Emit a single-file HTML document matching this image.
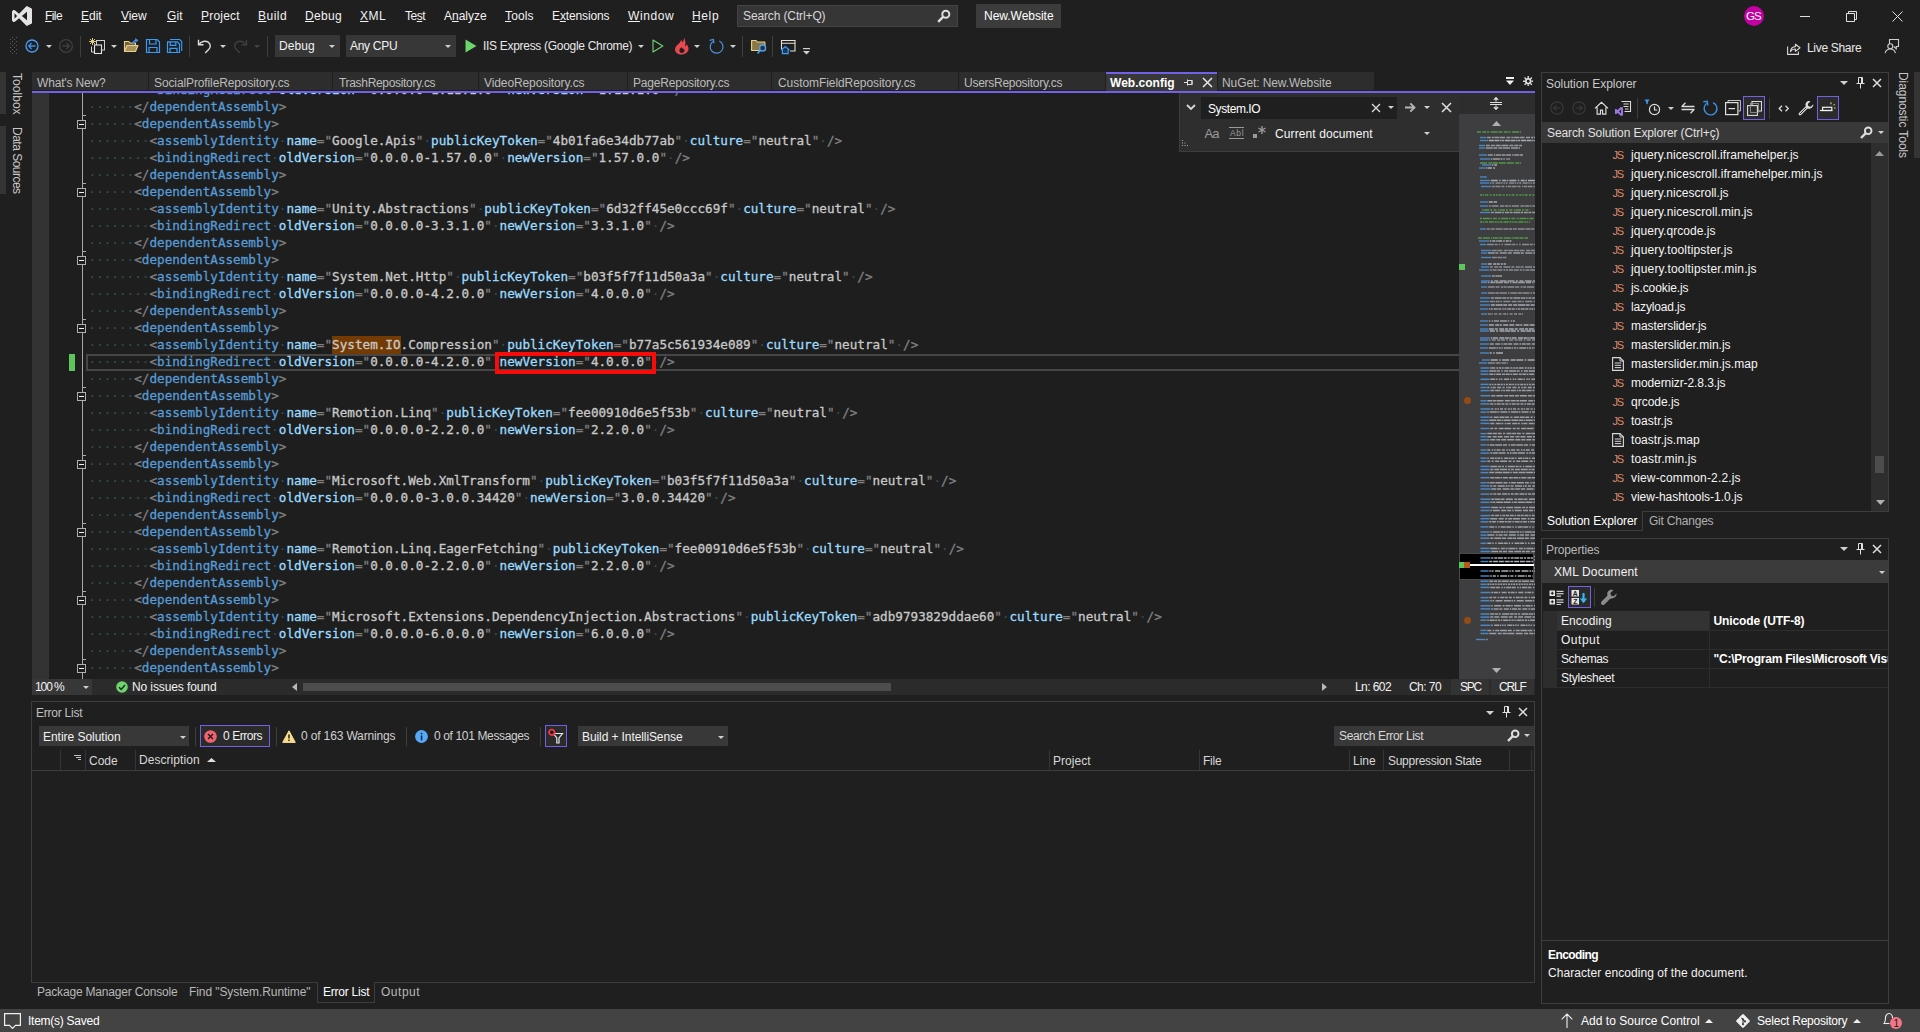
<!DOCTYPE html>
<html lang="en"><head><meta charset="utf-8"><title>New.Website - Microsoft Visual Studio</title>
<style>
html,body{margin:0;padding:0;}
body{width:1920px;height:1032px;overflow:hidden;background:#1f1f1f;position:relative;font-family:"Liberation Sans", sans-serif;font-size:12px;color:#f2f2f2;}
#r{position:absolute;left:0;top:0;width:1920px;height:1032px;overflow:hidden;}
#r div,#r span,#r svg{position:absolute;box-sizing:border-box;}
#r span{white-space:pre;line-height:16px;}
#r u{text-decoration:underline;text-underline-offset:1px;text-decoration-thickness:1px;}
#r .cl{left:88.5px;height:17px;line-height:17px;font-family:"DejaVu Sans Mono", "Liberation Mono", monospace;font-size:12.652px;white-space:pre;color:#c8c8c8;-webkit-text-stroke:.3px;}
#r .cl i,#r .cl b,#r .cl em,#r .cl s,#r .cl q{font-style:normal;font-weight:normal;text-decoration:none;position:static;}
#r .cl i{color:#808080;}
#r .cl b{color:#569cd6;}
#r .cl em{color:#9cdcfe;}
#r .cl s{color:#33504f;-webkit-text-stroke:0;}
#r .cl q{quotes:none;background:#733b03;padding:1px 0 2px;}
#r .cl span{position:static;line-height:17px;}
</style></head>
<body><div id="r">
<svg style="left:12px;top:6px;" width="20" height="20" viewBox="0 0 24 24"><path d="M17.600 0 23.200 2.700Q24 3.100 24 4V20Q24 20.900 23.200 21.300L17.600 24 8.500 14.700 3.500 18.800 1.500 19.200 0 17.300V6.700L1.500 4.800 3.500 5.200 8.500 9.300ZM18 6.900V17.100L11.800 12ZM3 8.600V15.400L6.100 12Z" fill="#e4e4e4" fill-rule="evenodd"/></svg>
<span style="left:45px;top:8.0px;letter-spacing:-0.581px;"><u>F</u>ile</span>
<span style="left:81px;top:8.0px;letter-spacing:-0.029px;"><u>E</u>dit</span>
<span style="left:121px;top:8.0px;letter-spacing:-0.066px;"><u>V</u>iew</span>
<span style="left:167px;top:8.0px;letter-spacing:0.128px;"><u>G</u>it</span>
<span style="left:201px;top:8.0px;letter-spacing:0.207px;"><u>P</u>roject</span>
<span style="left:258px;top:8.0px;letter-spacing:0.478px;"><u>B</u>uild</span>
<span style="left:305px;top:8.0px;letter-spacing:0.306px;"><u>D</u>ebug</span>
<span style="left:360px;top:8.0px;letter-spacing:0.456px;"><u>X</u>ML</span>
<span style="left:405px;top:8.0px;letter-spacing:-0.472px;">Te<u>s</u>t</span>
<span style="left:444px;top:8.0px;letter-spacing:-0.017px;">A<u>n</u>alyze</span>
<span style="left:505px;top:8.0px;letter-spacing:0.146px;"><u>T</u>ools</span>
<span style="left:552px;top:8.0px;letter-spacing:-0.123px;">E<u>x</u>tensions</span>
<span style="left:628px;top:8.0px;letter-spacing:0.583px;"><u>W</u>indow</span>
<span style="left:692px;top:8.0px;letter-spacing:0.638px;"><u>H</u>elp</span>
<div style="left:737px;top:5px;width:221px;height:22px;background:#363636;border:1px solid #434343;"></div>
<span style="left:743px;top:8.0px;color:#d8d8d8;letter-spacing:-0.126px;">Search (Ctrl+Q)</span>
<svg style="left:937px;top:9px;" width="14" height="14" viewBox="0 0 14 14"><circle cx="8.8" cy="5.2" r="3.500" fill="none" stroke="#dedede" stroke-width="2"/><path d="M6.3 7.7 1.2 12.8" stroke="#dedede" stroke-width="2.500"/></svg>
<div style="left:976px;top:4px;width:85px;height:24px;background:#3c3c3c;"></div>
<span style="left:984px;top:8.0px;color:#ffffff;letter-spacing:-0.021px;">New.Website</span>
<div style="left:1743.5px;top:5.5px;width:20.5px;height:20.5px;background:#c500a3;border-radius:50%;"></div>
<span style="left:1746px;top:8.0px;font-size:11.5px;color:#ffffff;letter-spacing:-1.025px;">GS</span>
<svg style="left:1800px;top:16px;" width="10" height="1" viewBox="0 0 10 1"><rect width="10" height="1" fill="#e0e0e0"/></svg>
<svg style="left:1846px;top:11px;" width="11" height="11" viewBox="0 0 11 11"><path d="M.5 2.5h8v8h-8zM2.5 2.5v-2h8v8h-2" fill="none" stroke="#e0e0e0"/></svg>
<svg style="left:1892px;top:11px;" width="11" height="11" viewBox="0 0 11 11"><path d="M.5.5l10 10M10.5.5l-10 10" stroke="#e0e0e0" fill="none"/></svg>
<svg style="left:1787px;top:42px;" width="14" height="13" viewBox="0 0 14 13"><path d="M.6 4.5v7.9h10.8V9.5" fill="none" stroke="#d8d8d8" stroke-width="1.1"/><path d="M3.4 9.6c.4-3.2 2.2-4.9 5-5V2.2l4.6 3.6-4.6 3.6V7c-2.3-.1-3.9.8-5 2.6z" fill="none" stroke="#d8d8d8" stroke-width="1.1" stroke-linejoin="round"/></svg>
<span style="left:1807px;top:40.0px;color:#e8e8e8;letter-spacing:-0.308px;">Live Share</span>
<svg style="left:1884px;top:38px;" width="16" height="16" viewBox="0 0 16 16"><path d="M5.5 7.5V1.5h9v7h-2.2v2.3L9.8 8.5" fill="none" stroke="#d0d0d0" stroke-width="1.1"/><circle cx="6.3" cy="8.3" r="2.5" fill="#1f1f1f" stroke="#d0d0d0" stroke-width="1.1"/><path d="M1.2 15.2c.5-2.9 2.4-4.2 5.1-4.2s4.6 1.3 5.1 4.2" fill="none" stroke="#d0d0d0" stroke-width="1.1"/></svg>
<svg style="left:10px;top:37px;" width="8" height="20" viewBox="0 0 8 20"><rect x="2" y="0" width="1" height="1" fill="#5c5c5c"/><rect x="6" y="0" width="1" height="1" fill="#5c5c5c"/><rect x="0" y="2" width="1" height="1" fill="#5c5c5c"/><rect x="4" y="2" width="1" height="1" fill="#5c5c5c"/><rect x="2" y="4" width="1" height="1" fill="#5c5c5c"/><rect x="6" y="4" width="1" height="1" fill="#5c5c5c"/><rect x="0" y="6" width="1" height="1" fill="#5c5c5c"/><rect x="4" y="6" width="1" height="1" fill="#5c5c5c"/><rect x="2" y="8" width="1" height="1" fill="#5c5c5c"/><rect x="6" y="8" width="1" height="1" fill="#5c5c5c"/><rect x="0" y="10" width="1" height="1" fill="#5c5c5c"/><rect x="4" y="10" width="1" height="1" fill="#5c5c5c"/><rect x="2" y="12" width="1" height="1" fill="#5c5c5c"/><rect x="6" y="12" width="1" height="1" fill="#5c5c5c"/><rect x="0" y="14" width="1" height="1" fill="#5c5c5c"/><rect x="4" y="14" width="1" height="1" fill="#5c5c5c"/><rect x="2" y="16" width="1" height="1" fill="#5c5c5c"/><rect x="6" y="16" width="1" height="1" fill="#5c5c5c"/></svg>
<svg style="left:23.5px;top:37.5px;" width="16" height="16" viewBox="0 0 16 16"><circle cx="8" cy="8" r="6" fill="none" stroke="#4b9cf0" stroke-width="1.3"/><path d="M11.6 8H4.8M7.6 5 4.6 8l3 3" fill="none" stroke="#3b8fe4" stroke-width="1.3"/></svg>
<svg style="left:46px;top:45px;" width="6" height="3" viewBox="0 0 6 3"><path d="M0 0H6L3.0 3Z" fill="#d0d0d0"/></svg>
<svg style="left:58px;top:38px;" width="16" height="16" viewBox="0 0 16 16"><circle cx="8" cy="8" r="6.4" fill="none" stroke="#3f3f3f" stroke-width="1.3"/><path d="M4.4 8h6.8M8.4 5l3 3-3 3" fill="none" stroke="#3f3f3f" stroke-width="1.3"/></svg>
<div style="left:80px;top:36px;width:1px;height:21px;background:#3d3d3d;"></div>
<svg style="left:88px;top:37px;" width="18" height="18" viewBox="0 0 18 18"><rect x="8.500" y="3.500" width="8" height="9.500" fill="none" stroke="#d0d0d0" stroke-width="1"/><path d="M3.500 9.500v5.500h3" fill="none" stroke="#d8d8d8" stroke-width="1"/><rect x="6.500" y="8" width="7" height="8.500" fill="#1f1f1f" stroke="#e4e4e4" stroke-width="1.100"/><path d="M4.500 1v7M1 4.500h7M2 2l5 5M7 2 2 7" stroke="#f0dc8c" stroke-width=".900"/></svg>
<svg style="left:111px;top:45px;" width="6" height="3" viewBox="0 0 6 3"><path d="M0 0H6L3.0 3Z" fill="#d0d0d0"/></svg>
<svg style="left:123px;top:37px;" width="17" height="18" viewBox="0 0 17 18"><path d="M1.500 14.500V4.500h4.200l1.300 1.500h5.500v2.500" fill="#6d5f38" stroke="#e9d18d" stroke-width="1.100"/><path d="M1.500 14.500 4 8.500h11L12.500 14.500z" fill="#a8925a" stroke="#e9d18d" stroke-width="1.100" stroke-linejoin="round"/><path d="M10 7.500c.1-2.600 1.300-4 3.300-4.300" fill="none" stroke="#3b8fe4" stroke-width="1.400"/><path d="M12 1l3.500 2.200-3 2.600z" fill="#3b8fe4"/></svg>
<svg style="left:145px;top:38px;" width="16" height="16" viewBox="0 0 16 16"><path d="M1.500 1.500h10.700l2.300 2.300v10.700H1.500z" fill="none" stroke="#3b9bf5" stroke-width="1.200"/><path d="M4.500 1.500v4.500h6.500V1.500M4 14.500V9.500h8v5" fill="none" stroke="#3b9bf5" stroke-width="1.200"/></svg>
<svg style="left:166px;top:38px;" width="17" height="16" viewBox="0 0 17 16"><path d="M4 1.500h9.700l2 2v9.500" fill="none" stroke="#3b9bf5" stroke-width="1.100"/><path d="M1.500 3.800h9.800l2.200 2.200v8.500H1.500z" fill="none" stroke="#3b9bf5" stroke-width="1.200"/><path d="M4.200 4v3.300h5.600V4M4 14.300v-4h7v4" fill="none" stroke="#3b9bf5" stroke-width="1.200"/></svg>
<div style="left:189px;top:36px;width:1px;height:21px;background:#3d3d3d;"></div>
<svg style="left:197px;top:38px;" width="16" height="16" viewBox="0 0 16 16"><path d="M1.5 1.8v5h5" fill="none" stroke="#dcdcdc" stroke-width="1.4"/><path d="M1.8 6.6C4 3.4 8.300 2.200 11.2 4.200c2.800 2 2.600 5.300.4 7.400L8.200 15" fill="none" stroke="#dcdcdc" stroke-width="1.4"/></svg>
<svg style="left:220px;top:45px;" width="6" height="3" viewBox="0 0 6 3"><path d="M0 0H6L3.0 3Z" fill="#d0d0d0"/></svg>
<svg style="left:232px;top:38px;" width="16" height="16" viewBox="0 0 16 16"><path d="M14.5 1.8v5h-5" fill="none" stroke="#3f3f3f" stroke-width="1.4"/><path d="M14.2 6.600C12 3.400 7.700 2.200 4.800 4.200c-2.800 2-2.600 5.300-.4 7.400L7.800 15" fill="none" stroke="#3f3f3f" stroke-width="1.4"/></svg>
<svg style="left:254px;top:45px;" width="6" height="3" viewBox="0 0 6 3"><path d="M0 0H6L3.0 3Z" fill="#444"/></svg>
<div style="left:267px;top:36px;width:1px;height:21px;background:#3d3d3d;"></div>
<div style="left:275px;top:35px;width:65px;height:22px;background:#373737;"></div>
<span style="left:279px;top:38.0px;letter-spacing:0.056px;">Debug</span>
<svg style="left:329px;top:45px;" width="6" height="3" viewBox="0 0 6 3"><path d="M0 0H6L3.0 3Z" fill="#d0d0d0"/></svg>
<div style="left:346px;top:35px;width:110px;height:22px;background:#373737;"></div>
<span style="left:350px;top:38.0px;letter-spacing:-0.293px;">Any CPU</span>
<svg style="left:445px;top:45px;" width="6" height="3" viewBox="0 0 6 3"><path d="M0 0H6L3.0 3Z" fill="#d0d0d0"/></svg>
<svg style="left:465px;top:39px;" width="12" height="14" viewBox="0 0 12 14"><path d="M.5.5v13L11.500 7z" fill="#6cd66c"/></svg>
<span style="left:483px;top:38.0px;color:#e8e8e8;letter-spacing:-0.300px;">IIS Express (Google Chrome)</span>
<svg style="left:638px;top:45px;" width="6" height="3" viewBox="0 0 6 3"><path d="M0 0H6L3.0 3Z" fill="#d0d0d0"/></svg>
<svg style="left:652px;top:38.5px;" width="12" height="14" viewBox="0 0 12 14"><path d="M1 1v12l9.800-6z" fill="none" stroke="#72d072" stroke-width="1.100" stroke-linejoin="round"/></svg>
<svg style="left:674px;top:37px;" width="16" height="18" viewBox="0 0 16 18"><path d="M9.800.600c.500 2.300-.400 3.800-1.800 5 .100-1.200-.300-2.200-1-2.900-.200 2-1.300 3.100-2.600 4.400C3 8.500 1 10 1 12.600c0 2.800 2.600 5 6.300 5 4 0 7.200-2.400 7.200-5.800 0-2-.800-3.400-1.600-4.400-.300 1.100-.900 1.800-1.700 2.200.600-3.200.200-6.900-1.400-9z" fill="#e8494f"/><path d="M7.600 10.300c-1.300 1-2.200 1.800-2.200 3.200s1 2.400 2.500 2.400 2.600-1 2.600-2.400c0-.900-.400-1.500-.800-2-.200.600-.500.900-.900 1.100.100-.900-.300-1.700-1.200-2.300z" fill="#1f1f1f"/></svg>
<svg style="left:694px;top:45px;" width="6" height="3" viewBox="0 0 6 3"><path d="M0 0H6L3.0 3Z" fill="#d0d0d0"/></svg>
<svg style="left:707.5px;top:37.5px;" width="17" height="17" viewBox="0 0 17 17"><path d="M5 3.500A6.400 6.400 0 1 0 11.300 3" fill="none" stroke="#4a94e0" stroke-width="1.200"/><path d="M1.600 2.300 5.400 1.500 6 5.300" fill="none" stroke="#4a94e0" stroke-width="1.200"/></svg>
<svg style="left:730px;top:45px;" width="6" height="3" viewBox="0 0 6 3"><path d="M0 0H6L3.0 3Z" fill="#d0d0d0"/></svg>
<div style="left:742px;top:36px;width:1px;height:21px;background:#3d3d3d;"></div>
<svg style="left:750px;top:38px;" width="18" height="17" viewBox="0 0 18 17"><path d="M1.600 12.500V2.500h4.500l1.300 1.500h7.500v8.500z" fill="#8a7844" stroke="#e9d18d" stroke-width="1.100" stroke-linejoin="round"/><circle cx="12.600" cy="10" r="3" fill="#2a2f38" stroke="#4aa0f5" stroke-width="1.400"/><path d="M10.400 12.300 7.600 15.400" stroke="#4aa0f5" stroke-width="1.700"/></svg>
<div style="left:772px;top:36px;width:1px;height:21px;background:#3d3d3d;"></div>
<svg style="left:779px;top:38px;" width="17" height="17" viewBox="0 0 17 17"><path d="M2.500 11.500V2.500h13.500v10.500H11M2.500 5.300h13.500" fill="none" stroke="#e6e0d4" stroke-width="1.100"/><path d="M2.200 12 6.300 8.600l4.100 3.400M3.400 11.600v4h5.800v-4" fill="#1b3a5c" stroke="#3b9bf5" stroke-width="1.200"/></svg>
<svg style="left:803px;top:48px;" width="7" height="7" viewBox="0 0 7 7"><rect x="0" y="0" width="7" height="1.200" fill="#d0d0d0"/><path d="M0 3h7L3.500 6.500z" fill="#d0d0d0"/></svg>
<div style="left:0px;top:72px;width:6px;height:42px;background:#353535;"></div>
<div style="left:0px;top:126px;width:6px;height:68px;background:#353535;"></div>
<span style="left:25px;top:72.5px;color:#c8c8c8;letter-spacing:0.038px;transform-origin:0 0;transform:rotate(90deg);">Toolbox</span>
<span style="left:25px;top:127.0px;color:#c8c8c8;letter-spacing:-0.509px;transform-origin:0 0;transform:rotate(90deg);">Data Sources</span>
<div style="left:32px;top:72px;width:116px;height:18px;background:#2d2d2d;"></div>
<span style="left:37px;top:74.5px;color:#bcbcbc;letter-spacing:-0.171px;">What&#x27;s New?</span>
<div style="left:149px;top:72px;width:183px;height:18px;background:#2d2d2d;"></div>
<span style="left:154px;top:74.5px;color:#bcbcbc;letter-spacing:-0.116px;">SocialProfileRepository.cs</span>
<div style="left:333px;top:72px;width:145px;height:18px;background:#2d2d2d;"></div>
<span style="left:339px;top:74.5px;color:#bcbcbc;letter-spacing:-0.319px;">TrashRepository.cs</span>
<div style="left:479px;top:72px;width:148px;height:18px;background:#2d2d2d;"></div>
<span style="left:484px;top:74.5px;color:#bcbcbc;letter-spacing:-0.099px;">VideoRepository.cs</span>
<div style="left:628px;top:72px;width:143px;height:18px;background:#2d2d2d;"></div>
<span style="left:633px;top:74.5px;color:#bcbcbc;letter-spacing:-0.202px;">PageRepository.cs</span>
<div style="left:772px;top:72px;width:186px;height:18px;background:#2d2d2d;"></div>
<span style="left:778px;top:74.5px;color:#bcbcbc;letter-spacing:-0.068px;">CustomFieldRepository.cs</span>
<div style="left:959px;top:72px;width:146px;height:18px;background:#2d2d2d;"></div>
<span style="left:964px;top:74.5px;color:#bcbcbc;letter-spacing:-0.267px;">UsersRepository.cs</span>
<div style="left:1106px;top:72px;width:111px;height:19px;background:#383838;border-top:2px solid #7160e8;"></div>
<span style="left:1110px;top:74.5px;color:#ffffff;font-weight:700;letter-spacing:0.016px;">Web.config</span>
<svg style="left:1184px;top:78px;" width="9" height="9" viewBox="0 0 9 9"><path d="M0 4.500h3M3.500 1.500v6M3.500 2.500h4.500v4H3.500M8 2v5" fill="none" stroke="#e0e0e0" stroke-width="1"/></svg>
<svg style="left:1202px;top:77px;" width="11" height="11" viewBox="0 0 11 11"><path d="M1 1l9 9M10 1l-9 9" stroke="#e8e8e8" stroke-width="1.500" fill="none"/></svg>
<div style="left:1218px;top:72px;width:156px;height:18px;background:#2d2d2d;"></div>
<span style="left:1222px;top:74.5px;color:#bcbcbc;letter-spacing:-0.092px;">NuGet: New.Website</span>
<svg style="left:1506px;top:77px;" width="8" height="9" viewBox="0 0 8 9"><rect width="8" height="2" fill="#f0f0f0"/><path d="M0 3.500h8L4 8z" fill="#f0f0f0"/></svg>
<svg style="left:1523px;top:76px;" width="10.4" height="10.4" viewBox="0 0 12 12"><g fill="none" stroke="#e0e0e0"><circle cx="6" cy="6" r="2.700" stroke-width="2"/><path d="M6 0v12M0 6h12M1.800 1.800l8.400 8.400M10.200 1.800 1.800 10.200" stroke-width="1.600" stroke-dasharray="2.200 7.600 2.200 0"/></g><circle cx="6" cy="6" r="1.300" fill="#1f1f1f"/></svg>
<div style="left:32px;top:91px;width:1503px;height:2px;background:#7160e8;"></div>
<div style="left:32px;top:93px;width:1427px;height:586px;background:#1e1e1e;overflow:hidden;"></div>
<div style="left:32px;top:93px;width:17px;height:586px;background:#333333;"></div>
<div style="left:0;top:93px;width:1459px;height:586px;overflow:hidden;">
<div style="left:82px;top:0;width:1px;height:587px;background:#a8a8a8;"></div>
<div style="left:86px;top:261px;width:1373px;height:17px;border:2px solid #464646;border-right:none;"></div>
<div style="left:69px;top:261px;width:6px;height:17px;background:#5ec45c;"></div>
<div class="cl" style="top:-12px"><s>········</s><i>&lt;</i><b>bindingRedirect</b><s>·</s><em>oldVersion</em><i>="</i>0.0.0.0-1.11.1.0<i>"</i><s>·</s><em>newVersion</em><i>="</i>1.11.1.0<i>"</i><s>·</s><i>/&gt;</i></div>
<div class="cl" style="top:5px"><s>······</s><i>&lt;/</i><b>dependentAssembly</b><i>&gt;</i></div>
<div style="left:82px;top:22px;width:4px;height:1px;background:#a8a8a8;"></div>
<div class="cl" style="top:22px"><s>······</s><i>&lt;</i><b>dependentAssembly</b><i>&gt;</i></div>
<div style="left:77px;top:27px;width:9px;height:9px;border:1px solid #b0b0b0;background:#1e1e1e;"></div>
<div style="left:79px;top:31px;width:5px;height:1px;background:#f0f0f0;"></div>
<div class="cl" style="top:39px"><s>········</s><i>&lt;</i><b>assemblyIdentity</b><s>·</s><em>name</em><i>="</i>Google.Apis<i>"</i><s>·</s><em>publicKeyToken</em><i>="</i>4b01fa6e34db77ab<i>"</i><s>·</s><em>culture</em><i>="</i>neutral<i>"</i><s>·</s><i>/&gt;</i></div>
<div class="cl" style="top:56px"><s>········</s><i>&lt;</i><b>bindingRedirect</b><s>·</s><em>oldVersion</em><i>="</i>0.0.0.0-1.57.0.0<i>"</i><s>·</s><em>newVersion</em><i>="</i>1.57.0.0<i>"</i><s>·</s><i>/&gt;</i></div>
<div class="cl" style="top:73px"><s>······</s><i>&lt;/</i><b>dependentAssembly</b><i>&gt;</i></div>
<div style="left:82px;top:90px;width:4px;height:1px;background:#a8a8a8;"></div>
<div class="cl" style="top:90px"><s>······</s><i>&lt;</i><b>dependentAssembly</b><i>&gt;</i></div>
<div style="left:77px;top:95px;width:9px;height:9px;border:1px solid #b0b0b0;background:#1e1e1e;"></div>
<div style="left:79px;top:99px;width:5px;height:1px;background:#f0f0f0;"></div>
<div class="cl" style="top:107px"><s>········</s><i>&lt;</i><b>assemblyIdentity</b><s>·</s><em>name</em><i>="</i>Unity.Abstractions<i>"</i><s>·</s><em>publicKeyToken</em><i>="</i>6d32ff45e0ccc69f<i>"</i><s>·</s><em>culture</em><i>="</i>neutral<i>"</i><s>·</s><i>/&gt;</i></div>
<div class="cl" style="top:124px"><s>········</s><i>&lt;</i><b>bindingRedirect</b><s>·</s><em>oldVersion</em><i>="</i>0.0.0.0-3.3.1.0<i>"</i><s>·</s><em>newVersion</em><i>="</i>3.3.1.0<i>"</i><s>·</s><i>/&gt;</i></div>
<div class="cl" style="top:141px"><s>······</s><i>&lt;/</i><b>dependentAssembly</b><i>&gt;</i></div>
<div style="left:82px;top:158px;width:4px;height:1px;background:#a8a8a8;"></div>
<div class="cl" style="top:158px"><s>······</s><i>&lt;</i><b>dependentAssembly</b><i>&gt;</i></div>
<div style="left:77px;top:163px;width:9px;height:9px;border:1px solid #b0b0b0;background:#1e1e1e;"></div>
<div style="left:79px;top:167px;width:5px;height:1px;background:#f0f0f0;"></div>
<div class="cl" style="top:175px"><s>········</s><i>&lt;</i><b>assemblyIdentity</b><s>·</s><em>name</em><i>="</i>System.Net.Http<i>"</i><s>·</s><em>publicKeyToken</em><i>="</i>b03f5f7f11d50a3a<i>"</i><s>·</s><em>culture</em><i>="</i>neutral<i>"</i><s>·</s><i>/&gt;</i></div>
<div class="cl" style="top:192px"><s>········</s><i>&lt;</i><b>bindingRedirect</b><s>·</s><em>oldVersion</em><i>="</i>0.0.0.0-4.2.0.0<i>"</i><s>·</s><em>newVersion</em><i>="</i>4.0.0.0<i>"</i><s>·</s><i>/&gt;</i></div>
<div class="cl" style="top:209px"><s>······</s><i>&lt;/</i><b>dependentAssembly</b><i>&gt;</i></div>
<div style="left:82px;top:226px;width:4px;height:1px;background:#a8a8a8;"></div>
<div class="cl" style="top:226px"><s>······</s><i>&lt;</i><b>dependentAssembly</b><i>&gt;</i></div>
<div style="left:77px;top:231px;width:9px;height:9px;border:1px solid #b0b0b0;background:#1e1e1e;"></div>
<div style="left:79px;top:235px;width:5px;height:1px;background:#f0f0f0;"></div>
<div class="cl" style="top:243px"><s>········</s><i>&lt;</i><b>assemblyIdentity</b><s>·</s><em>name</em><i>="</i><q>System.IO</q>.Compression<i>"</i><s>·</s><em>publicKeyToken</em><i>="</i>b77a5c561934e089<i>"</i><s>·</s><em>culture</em><i>="</i>neutral<i>"</i><s>·</s><i>/&gt;</i></div>
<div class="cl" style="top:260px"><s>········</s><i>&lt;</i><b>bindingRedirect</b><s>·</s><em>oldVersion</em><i>="</i>0.0.0.0-4.2.0.0<i>"</i><s>·</s><em>newVersion</em><i>="</i>4.0.0.0<i>"</i><s>·</s><i>/&gt;</i></div>
<div class="cl" style="top:277px"><s>······</s><i>&lt;/</i><b>dependentAssembly</b><i>&gt;</i></div>
<div style="left:82px;top:294px;width:4px;height:1px;background:#a8a8a8;"></div>
<div class="cl" style="top:294px"><s>······</s><i>&lt;</i><b>dependentAssembly</b><i>&gt;</i></div>
<div style="left:77px;top:299px;width:9px;height:9px;border:1px solid #b0b0b0;background:#1e1e1e;"></div>
<div style="left:79px;top:303px;width:5px;height:1px;background:#f0f0f0;"></div>
<div class="cl" style="top:311px"><s>········</s><i>&lt;</i><b>assemblyIdentity</b><s>·</s><em>name</em><i>="</i>Remotion.Linq<i>"</i><s>·</s><em>publicKeyToken</em><i>="</i>fee00910d6e5f53b<i>"</i><s>·</s><em>culture</em><i>="</i>neutral<i>"</i><s>·</s><i>/&gt;</i></div>
<div class="cl" style="top:328px"><s>········</s><i>&lt;</i><b>bindingRedirect</b><s>·</s><em>oldVersion</em><i>="</i>0.0.0.0-2.2.0.0<i>"</i><s>·</s><em>newVersion</em><i>="</i>2.2.0.0<i>"</i><s>·</s><i>/&gt;</i></div>
<div class="cl" style="top:345px"><s>······</s><i>&lt;/</i><b>dependentAssembly</b><i>&gt;</i></div>
<div style="left:82px;top:362px;width:4px;height:1px;background:#a8a8a8;"></div>
<div class="cl" style="top:362px"><s>······</s><i>&lt;</i><b>dependentAssembly</b><i>&gt;</i></div>
<div style="left:77px;top:367px;width:9px;height:9px;border:1px solid #b0b0b0;background:#1e1e1e;"></div>
<div style="left:79px;top:371px;width:5px;height:1px;background:#f0f0f0;"></div>
<div class="cl" style="top:379px"><s>········</s><i>&lt;</i><b>assemblyIdentity</b><s>·</s><em>name</em><i>="</i>Microsoft.Web.XmlTransform<i>"</i><s>·</s><em>publicKeyToken</em><i>="</i>b03f5f7f11d50a3a<i>"</i><s>·</s><em>culture</em><i>="</i>neutral<i>"</i><s>·</s><i>/&gt;</i></div>
<div class="cl" style="top:396px"><s>········</s><i>&lt;</i><b>bindingRedirect</b><s>·</s><em>oldVersion</em><i>="</i>0.0.0.0-3.0.0.34420<i>"</i><s>·</s><em>newVersion</em><i>="</i>3.0.0.34420<i>"</i><s>·</s><i>/&gt;</i></div>
<div class="cl" style="top:413px"><s>······</s><i>&lt;/</i><b>dependentAssembly</b><i>&gt;</i></div>
<div style="left:82px;top:430px;width:4px;height:1px;background:#a8a8a8;"></div>
<div class="cl" style="top:430px"><s>······</s><i>&lt;</i><b>dependentAssembly</b><i>&gt;</i></div>
<div style="left:77px;top:435px;width:9px;height:9px;border:1px solid #b0b0b0;background:#1e1e1e;"></div>
<div style="left:79px;top:439px;width:5px;height:1px;background:#f0f0f0;"></div>
<div class="cl" style="top:447px"><s>········</s><i>&lt;</i><b>assemblyIdentity</b><s>·</s><em>name</em><i>="</i>Remotion.Linq.EagerFetching<i>"</i><s>·</s><em>publicKeyToken</em><i>="</i>fee00910d6e5f53b<i>"</i><s>·</s><em>culture</em><i>="</i>neutral<i>"</i><s>·</s><i>/&gt;</i></div>
<div class="cl" style="top:464px"><s>········</s><i>&lt;</i><b>bindingRedirect</b><s>·</s><em>oldVersion</em><i>="</i>0.0.0.0-2.2.0.0<i>"</i><s>·</s><em>newVersion</em><i>="</i>2.2.0.0<i>"</i><s>·</s><i>/&gt;</i></div>
<div class="cl" style="top:481px"><s>······</s><i>&lt;/</i><b>dependentAssembly</b><i>&gt;</i></div>
<div style="left:82px;top:498px;width:4px;height:1px;background:#a8a8a8;"></div>
<div class="cl" style="top:498px"><s>······</s><i>&lt;</i><b>dependentAssembly</b><i>&gt;</i></div>
<div style="left:77px;top:503px;width:9px;height:9px;border:1px solid #b0b0b0;background:#1e1e1e;"></div>
<div style="left:79px;top:507px;width:5px;height:1px;background:#f0f0f0;"></div>
<div class="cl" style="top:515px"><s>········</s><i>&lt;</i><b>assemblyIdentity</b><s>·</s><em>name</em><i>="</i>Microsoft.Extensions.DependencyInjection.Abstractions<i>"</i><s>·</s><em>publicKeyToken</em><i>="</i>adb9793829ddae60<i>"</i><s>·</s><em>culture</em><i>="</i>neutral<i>"</i><s>·</s><i>/&gt;</i></div>
<div class="cl" style="top:532px"><s>········</s><i>&lt;</i><b>bindingRedirect</b><s>·</s><em>oldVersion</em><i>="</i>0.0.0.0-6.0.0.0<i>"</i><s>·</s><em>newVersion</em><i>="</i>6.0.0.0<i>"</i><s>·</s><i>/&gt;</i></div>
<div class="cl" style="top:549px"><s>······</s><i>&lt;/</i><b>dependentAssembly</b><i>&gt;</i></div>
<div style="left:82px;top:566px;width:4px;height:1px;background:#a8a8a8;"></div>
<div class="cl" style="top:566px"><s>······</s><i>&lt;</i><b>dependentAssembly</b><i>&gt;</i></div>
<div style="left:77px;top:571px;width:9px;height:9px;border:1px solid #b0b0b0;background:#1e1e1e;"></div>
<div style="left:79px;top:575px;width:5px;height:1px;background:#f0f0f0;"></div>
</div>
<div style="left:495px;top:352px;width:161px;height:22px;border:4px solid #f70b0b;"></div>
<div style="left:1179px;top:93px;width:280px;height:59px;background:#2e2e2e;border-left:1px solid #3d3d3d;border-bottom:1px solid #3d3d3d;"></div>
<div style="left:1201px;top:97px;width:196px;height:22px;background:#1f1f1f;"></div>
<svg style="left:1186px;top:104px;" width="10" height="7" viewBox="0 0 10 7"><path d="M1 1l4 4 4-4" fill="none" stroke="#d8d8d8" stroke-width="1.800"/></svg>
<span style="left:1208px;top:101.0px;color:#ffffff;letter-spacing:-0.427px;">System.IO</span>
<svg style="left:1371px;top:103px;" width="10" height="10" viewBox="0 0 10 10"><path d="M1 1l8 8M9 1l-8 8" stroke="#d8d8d8" stroke-width="1.400"/></svg>
<svg style="left:1388px;top:106px;" width="6" height="3" viewBox="0 0 6 3"><path d="M0 0H6L3.0 3Z" fill="#d0d0d0"/></svg>
<svg style="left:1404px;top:102px;" width="13" height="11" viewBox="0 0 13 11"><path d="M1 5.500h9.500M6.300 1.300l4.200 4.200-4.200 4.200" fill="none" stroke="#b4b4b4" stroke-width="1.900"/></svg>
<svg style="left:1424px;top:106px;" width="6" height="3" viewBox="0 0 6 3"><path d="M0 0H6L3.0 3Z" fill="#d0d0d0"/></svg>
<svg style="left:1441px;top:102px;" width="11" height="11" viewBox="0 0 11 11"><path d="M1 1l9 9M10 1l-9 9" stroke="#e0e0e0" stroke-width="1.500"/></svg>
<span style="left:1204.5px;top:125.5px;font-size:13px;color:#9a9a9a;letter-spacing:-0.806px;">Aa</span>
<div style="left:1229px;top:127px;width:15px;height:12px;border-top:1px solid #9a9a9a;border-bottom:1px solid #9a9a9a;"></div>
<span style="left:1230px;top:128.0px;font-size:8.5px;line-height:10px;color:#9a9a9a;letter-spacing:0.652px;">Abl</span>
<svg style="left:1253px;top:126px;" width="14" height="13" viewBox="0 0 14 13"><rect x="0" y="8" width="4" height="4" fill="#9a9a9a"/><path d="M9 0v8M5.500 2l7 4M12.500 2l-7 4" stroke="#9a9a9a" stroke-width="1.400"/></svg>
<span style="left:1275px;top:126.0px;color:#f5f5f5;letter-spacing:0.104px;">Current document</span>
<svg style="left:1424px;top:132px;" width="6" height="3" viewBox="0 0 6 3"><path d="M0 0H6L3.0 3Z" fill="#d0d0d0"/></svg>
<svg style="left:1182px;top:140px;" width="7" height="7" viewBox="0 0 7 7"><rect x="0.0" y="0.0" width="1" height="1" fill="#aaa"/><rect x="0.0" y="2.5" width="1" height="1" fill="#aaa"/><rect x="2.5" y="2.5" width="1" height="1" fill="#aaa"/><rect x="0.0" y="5.0" width="1" height="1" fill="#aaa"/><rect x="2.5" y="5.0" width="1" height="1" fill="#aaa"/><rect x="5.0" y="5.0" width="1" height="1" fill="#aaa"/></svg>
<div style="left:1459px;top:93px;width:76px;height:586px;background:#3e3e40;"></div>
<div style="left:1459px;top:93px;width:76px;height:21px;background:#2d2d2d;"></div>
<svg style="left:1490px;top:97px;" width="13" height="13" viewBox="0 0 13 13"><path d="M0 5.500h12M0 7.500h12" stroke="#e0e0e0" stroke-width="1"/><path d="M6 4.500V.800M3.800 2.800 6 .600 8.200 2.800M6 8.500v3.700M3.800 10.200 6 12.400 8.200 10.200" fill="none" stroke="#e0e0e0" stroke-width="1.200"/></svg>
<svg style="left:1492px;top:121px;" width="9" height="5" viewBox="0 0 9 5"><path d="M0 5H9L4.5 0Z" fill="#b0b0b0"/></svg>
<svg style="left:1492px;top:668px;" width="9" height="5" viewBox="0 0 9 5"><path d="M0 0h9L4.500 5z" fill="#b0b0b0"/></svg>
<svg style="left:1459px;top:93px;" width="76" height="586" viewBox="0 0 76 586"><path d="M18 39H62" stroke="#57a64a" stroke-width="1.4" stroke-dasharray="4 1.4 4 0.8 2 1.4 7 0.8" opacity="0.85"/><path d="M21 44.5H27" stroke="#4f8fcf" stroke-width="1.4" opacity=".9"/><path d="M27.8 44.5H76" stroke="#d4dbe3" stroke-width="1.4" stroke-dasharray="4 1 2 0.6 5 0.6 5 1.4" opacity="0.6"/><path d="M21 47.5H29" stroke="#4f8fcf" stroke-width="1.4" opacity=".9"/><path d="M29.8 47.5H76" stroke="#d4dbe3" stroke-width="1.4" stroke-dasharray="5 0.6 5 0.6 1.5 0.6 2 0.8" opacity="0.7"/><path d="M20 52.5H26" stroke="#4f8fcf" stroke-width="1.4" opacity=".9"/><path d="M26.8 52.5H63" stroke="#d4dbe3" stroke-width="1.4" stroke-dasharray="4 1 4 0.8 5 0.8 7 1" opacity="0.6"/><path d="M20 55H26" stroke="#4f8fcf" stroke-width="1.4" opacity=".9"/><path d="M26.8 55H61" stroke="#d4dbe3" stroke-width="1.4" stroke-dasharray="7 0.6 4 1 4 0.6 7 1" opacity="0.6"/><path d="M20 62H28" stroke="#4f8fcf" stroke-width="1.4" opacity=".9"/><path d="M28.8 62H64" stroke="#d4dbe3" stroke-width="1.4" stroke-dasharray="5 1 1.5 0.6 5 0.6 4 0.6" opacity="0.6"/><path d="M21 66H31" stroke="#4f8fcf" stroke-width="1.4" opacity=".9"/><path d="M31.8 66H51" stroke="#d4dbe3" stroke-width="1.4" stroke-dasharray="1.5 0.6 7 0.6 2 0.8 1.5 1.4" opacity="0.6"/><path d="M21 70H62" stroke="#57a64a" stroke-width="1.4" stroke-dasharray="7 1.4 4 0.6 5 0.8 7 1" opacity="0.85"/><path d="M23 72H32" stroke="#4f8fcf" stroke-width="1.4" opacity=".9"/><path d="M32.8 72H38" stroke="#d4dbe3" stroke-width="1.4" stroke-dasharray="1.5 1 3 0.6 4 0.6 2 0.8" opacity="0.7"/><path d="M20 75H26" stroke="#4f8fcf" stroke-width="1.4" opacity=".9"/><path d="M26.8 75H36" stroke="#d4dbe3" stroke-width="1.4" stroke-dasharray="1.5 0.6 4 1.4 2 0.8 4 0.8" opacity="0.7"/><path d="M21 84H28" stroke="#4f8fcf" stroke-width="1.4" opacity=".9"/><path d="M21 87.5H31" stroke="#4f8fcf" stroke-width="1.4" opacity=".9"/><path d="M31.8 87.5H76" stroke="#d4dbe3" stroke-width="1.4" stroke-dasharray="7 1.4 1.5 1.4 4 0.8 1.5 1" opacity="0.7"/><path d="M21 90H30" stroke="#4f8fcf" stroke-width="1.4" opacity=".9"/><path d="M30.8 90H76" stroke="#d4dbe3" stroke-width="1.4" stroke-dasharray="1.5 0.8 2 1.4 5 0.6 1.5 0.8" opacity="0.5"/><path d="M22 93.5H32" stroke="#4f8fcf" stroke-width="1.4" opacity=".9"/><path d="M32.8 93.5H76" stroke="#d4dbe3" stroke-width="1.4" stroke-dasharray="3 0.6 5 1 3 1.4 1.5 0.6" opacity="0.5"/><path d="M21 102H76" stroke="#57a64a" stroke-width="1.4" stroke-dasharray="2 0.8 1.5 1 3 1.4 2 1.4" opacity="0.85"/><path d="M21 109H29" stroke="#4f8fcf" stroke-width="1.4" opacity=".9"/><path d="M29.8 109H38" stroke="#d4dbe3" stroke-width="1.4" stroke-dasharray="4 0.8 7 0.8 3 0.8 5 0.8" opacity="0.7"/><path d="M21 113H29" stroke="#4f8fcf" stroke-width="1.4" opacity=".9"/><path d="M29.8 113H76" stroke="#d4dbe3" stroke-width="1.4" stroke-dasharray="2 0.8 7 1.4 4 0.6 4 0.6" opacity="0.5"/><path d="M23 117H71" stroke="#57a64a" stroke-width="1.4" stroke-dasharray="1.5 0.6 5 1 2 1.4 3 1.4" opacity="0.85"/><path d="M21 119.5H31" stroke="#4f8fcf" stroke-width="1.4" opacity=".9"/><path d="M31.8 119.5H76" stroke="#d4dbe3" stroke-width="1.4" stroke-dasharray="3 0.8 7 0.6 2 0.8 4 0.6" opacity="0.6"/><path d="M21 125.5H76" stroke="#57a64a" stroke-width="1.4" stroke-dasharray="2 0.8 7 0.6 1.5 1 4 1.4" opacity="0.85"/><path d="M21 129H71" stroke="#57a64a" stroke-width="1.4" stroke-dasharray="2 0.6 1.5 0.8 3 1 5 0.8" opacity="0.85"/><path d="M21 136H27" stroke="#4f8fcf" stroke-width="1.4" opacity=".9"/><path d="M27.8 136H76" stroke="#d4dbe3" stroke-width="1.4" stroke-dasharray="3 0.8 4 1 7 0.8 5 0.6" opacity="0.5"/><path d="M19 145H69" stroke="#57a64a" stroke-width="1.4" stroke-dasharray="4 1 7 1 1.5 0.6 5 0.6" opacity="0.85"/><path d="M20 148H30" stroke="#4f8fcf" stroke-width="1.4" opacity=".9"/><path d="M30.8 148H53" stroke="#d4dbe3" stroke-width="1.4" stroke-dasharray="1.5 1 3 0.8 1.5 0.6 4 1" opacity="0.7"/><path d="M21 151.5H27" stroke="#4f8fcf" stroke-width="1.4" opacity=".9"/><path d="M27.8 151.5H76" stroke="#d4dbe3" stroke-width="1.4" stroke-dasharray="7 0.8 3 1 1.5 1.4 1.5 1.4" opacity="0.5"/><path d="M22 157.5H32" stroke="#4f8fcf" stroke-width="1.4" opacity=".9"/><path d="M32.8 157.5H76" stroke="#d4dbe3" stroke-width="1.4" stroke-dasharray="5 0.6 5 1.4 4 0.6 5 0.6" opacity="0.5"/><path d="M22 160H28" stroke="#4f8fcf" stroke-width="1.4" opacity=".9"/><path d="M28.8 160H76" stroke="#d4dbe3" stroke-width="1.4" stroke-dasharray="7 0.6 3 1.4 7 1 4 1.4" opacity="0.6"/><path d="M22 164.5H32" stroke="#4f8fcf" stroke-width="1.4" opacity=".9"/><path d="M32.8 164.5H48" stroke="#d4dbe3" stroke-width="1.4" stroke-dasharray="5 0.6 5 0.6 3 0.6 4 0.6" opacity="0.5"/><path d="M22 171H28" stroke="#4f8fcf" stroke-width="1.4" opacity=".9"/><path d="M28.8 171H47" stroke="#d4dbe3" stroke-width="1.4" stroke-dasharray="4 1.4 3 0.6 3 1 2 0.8" opacity="0.7"/><path d="M22 174H30" stroke="#4f8fcf" stroke-width="1.4" opacity=".9"/><path d="M30.8 174H76" stroke="#d4dbe3" stroke-width="1.4" stroke-dasharray="3 1.4 4 0.8 3 1.4 7 1" opacity="0.5"/><path d="M20 177H30" stroke="#4f8fcf" stroke-width="1.4" opacity=".9"/><path d="M30.8 177H76" stroke="#d4dbe3" stroke-width="1.4" stroke-dasharray="2 0.8 4 0.8 5 1 2 0.8" opacity="0.5"/><path d="M22 183H32" stroke="#4f8fcf" stroke-width="1.4" opacity=".9"/><path d="M32.8 183H43" stroke="#d4dbe3" stroke-width="1.4" stroke-dasharray="3 0.6 7 0.6 3 0.8 1.5 1.4" opacity="0.6"/><path d="M22 188H31" stroke="#4f8fcf" stroke-width="1.4" opacity=".9"/><path d="M31.8 188H76" stroke="#d4dbe3" stroke-width="1.4" stroke-dasharray="2 1.4 4 1.4 7 1 7 1.4" opacity="0.6"/><path d="M22 189.5H28" stroke="#4f8fcf" stroke-width="1.4" opacity=".9"/><path d="M28.8 189.5H76" stroke="#d4dbe3" stroke-width="1.4" stroke-dasharray="1.5 1 5 0.6 7 1 5 1" opacity="0.6"/><path d="M22 194H28" stroke="#4f8fcf" stroke-width="1.4" opacity=".9"/><path d="M28.8 194H76" stroke="#d4dbe3" stroke-width="1.4" stroke-dasharray="7 0.8 4 1.4 2 0.6 3 0.8" opacity="0.5"/><path d="M22 200H28" stroke="#4f8fcf" stroke-width="1.4" opacity=".9"/><path d="M28.8 200H76" stroke="#d4dbe3" stroke-width="1.4" stroke-dasharray="7 0.6 4 0.6 7 1 1.5 0.8" opacity="0.5"/><path d="M21 205H31" stroke="#4f8fcf" stroke-width="1.4" opacity=".9"/><path d="M31.8 205H76" stroke="#d4dbe3" stroke-width="1.4" stroke-dasharray="3 0.8 7 0.6 4 0.6 2 0.8" opacity="0.6"/><path d="M21 208.5H30" stroke="#4f8fcf" stroke-width="1.4" opacity=".9"/><path d="M30.8 208.5H76" stroke="#d4dbe3" stroke-width="1.4" stroke-dasharray="5 0.8 4 0.8 1.5 1.4 7 1.4" opacity="0.5"/><path d="M21 212H31" stroke="#4f8fcf" stroke-width="1.4" opacity=".9"/><path d="M31.8 212H76" stroke="#d4dbe3" stroke-width="1.4" stroke-dasharray="4 0.8 7 0.6 4 1 4 1" opacity="0.7"/><path d="M21 216H29" stroke="#4f8fcf" stroke-width="1.4" opacity=".9"/><path d="M29.8 216H76" stroke="#d4dbe3" stroke-width="1.4" stroke-dasharray="1.5 0.6 2 0.8 4 0.6 3 1" opacity="0.6"/><path d="M22 221H28" stroke="#4f8fcf" stroke-width="1.4" opacity=".9"/><path d="M28.8 221H64" stroke="#d4dbe3" stroke-width="1.4" stroke-dasharray="3 0.6 1.5 1.4 3 1.4 3 1.4" opacity="0.5"/><path d="M21 228H29" stroke="#4f8fcf" stroke-width="1.4" opacity=".9"/><path d="M29.8 228H56" stroke="#d4dbe3" stroke-width="1.4" stroke-dasharray="1.5 1.4 1.5 0.8 5 1 7 0.8" opacity="0.6"/><path d="M21 232H29" stroke="#4f8fcf" stroke-width="1.4" opacity=".9"/><path d="M29.8 232H76" stroke="#d4dbe3" stroke-width="1.4" stroke-dasharray="5 1.4 4 0.6 2 1.4 5 1" opacity="0.7"/><path d="M21 236H29" stroke="#4f8fcf" stroke-width="1.4" opacity=".9"/><path d="M29.8 236H76" stroke="#d4dbe3" stroke-width="1.4" stroke-dasharray="5 1 3 1.4 5 0.8 3 0.8" opacity="0.7"/><path d="M21 238H30" stroke="#4f8fcf" stroke-width="1.4" opacity=".9"/><path d="M30.8 238H76" stroke="#d4dbe3" stroke-width="1.4" stroke-dasharray="5 1.4 2 1.4 5 0.6 5 0.6" opacity="0.7"/><path d="M21 245H31" stroke="#4f8fcf" stroke-width="1.4" opacity=".9"/><path d="M31.8 245H76" stroke="#d4dbe3" stroke-width="1.4" stroke-dasharray="1.5 0.6 5 1.4 5 0.6 4 0.6" opacity="0.7"/><path d="M21 247H29" stroke="#4f8fcf" stroke-width="1.4" opacity=".9"/><path d="M29.8 247H76" stroke="#d4dbe3" stroke-width="1.4" stroke-dasharray="1.5 1.4 4 1.4 3 0.8 4 1.4" opacity="0.5"/><path d="M21 251H30" stroke="#4f8fcf" stroke-width="1.4" opacity=".9"/><path d="M30.8 251H76" stroke="#d4dbe3" stroke-width="1.4" stroke-dasharray="4 1.4 5 1 1.5 0.8 4 0.6" opacity="0.6"/><path d="M21 255H29" stroke="#4f8fcf" stroke-width="1.4" opacity=".9"/><path d="M29.8 255H76" stroke="#d4dbe3" stroke-width="1.4" stroke-dasharray="7 0.6 1.5 0.8 2 0.8 1.5 1" opacity="0.6"/><path d="M21 260H30" stroke="#4f8fcf" stroke-width="1.4" opacity=".9"/><path d="M30.8 260H44" stroke="#d4dbe3" stroke-width="1.4" stroke-dasharray="2 1.4 1.5 1.4 7 0.6 5 1" opacity="0.7"/><path d="M23 267H31" stroke="#4f8fcf" stroke-width="1.4" opacity=".9"/><path d="M31.8 267H76" stroke="#d4dbe3" stroke-width="1.4" stroke-dasharray="7 1.4 1.5 1.4 7 1.4 5 0.8" opacity="0.7"/><path d="M20 270H28" stroke="#4f8fcf" stroke-width="1.4" opacity=".9"/><path d="M28.8 270H49" stroke="#d4dbe3" stroke-width="1.4" stroke-dasharray="7 0.8 5 0.8 5 0.8 2 1" opacity="0.5"/><path d="M21.5 275.0H30.5" stroke="#4f8fcf" stroke-width="1.5" opacity=".9"/><path d="M31.3 275.0H76" stroke="#d4dbe3" stroke-width="1.5" stroke-dasharray="5 1 2 0.8 2 0.6 2 0.8" opacity="0.62"/><path d="M21.5 278.1H29.5" stroke="#4f8fcf" stroke-width="1.5" opacity=".9"/><path d="M30.3 278.1H76" stroke="#d4dbe3" stroke-width="1.5" stroke-dasharray="7 0.6 3 1.4 1.5 1.4 4 0.8" opacity="0.62"/><path d="M21.5 281.20000000000005H29.5" stroke="#4f8fcf" stroke-width="1.5" opacity=".9"/><path d="M30.3 281.20000000000005H76" stroke="#d4dbe3" stroke-width="1.5" stroke-dasharray="4 0.6 1.5 0.8 5 1 3 0.6" opacity="0.62"/><path d="M21.5 286.30000000000007H30.5" stroke="#4f8fcf" stroke-width="1.5" opacity=".9"/><path d="M31.3 286.30000000000007H76" stroke="#d4dbe3" stroke-width="1.5" stroke-dasharray="5 0.8 1.5 1.4 1.5 0.6 1.5 1.4" opacity="0.62"/><path d="M21.5 291.4000000000001H29.5" stroke="#4f8fcf" stroke-width="1.5" opacity=".9"/><path d="M30.3 291.4000000000001H76" stroke="#d4dbe3" stroke-width="1.5" stroke-dasharray="2 0.8 1.5 0.8 2 0.8 3 0.6" opacity="0.62"/><path d="M21.5 294.5000000000001H27.5" stroke="#4f8fcf" stroke-width="1.5" opacity=".9"/><path d="M28.3 294.5000000000001H76" stroke="#d4dbe3" stroke-width="1.5" stroke-dasharray="2 1.4 1.5 0.6 3 1.4 4 1.4" opacity="0.62"/><path d="M21.5 297.60000000000014H30.5" stroke="#4f8fcf" stroke-width="1.5" opacity=".9"/><path d="M31.3 297.60000000000014H76" stroke="#d4dbe3" stroke-width="1.5" stroke-dasharray="4 0.8 5 1 1.5 0.6 2 0.8" opacity="0.62"/><path d="M21.5 302.70000000000016H31.5" stroke="#4f8fcf" stroke-width="1.5" opacity=".9"/><path d="M32.3 302.70000000000016H76" stroke="#d4dbe3" stroke-width="1.5" stroke-dasharray="4 1 7 1 4 0.8 5 0.8" opacity="0.62"/><path d="M21.5 307.8000000000002H27.5" stroke="#4f8fcf" stroke-width="1.5" opacity=".9"/><path d="M28.3 307.8000000000002H76" stroke="#d4dbe3" stroke-width="1.5" stroke-dasharray="5 0.6 3 0.6 7 1.4 5 0.8" opacity="0.62"/><path d="M21.5 310.9000000000002H30.5" stroke="#4f8fcf" stroke-width="1.5" opacity=".9"/><path d="M31.3 310.9000000000002H76" stroke="#d4dbe3" stroke-width="1.5" stroke-dasharray="3 1 1.5 0.8 4 0.8 3 1" opacity="0.62"/><path d="M21.5 316.0000000000002H31.5" stroke="#4f8fcf" stroke-width="1.5" opacity=".9"/><path d="M32.3 316.0000000000002H76" stroke="#d4dbe3" stroke-width="1.5" stroke-dasharray="2 1.4 2 0.8 1.5 1 3 1.4" opacity="0.62"/><path d="M21.5 319.10000000000025H27.5" stroke="#4f8fcf" stroke-width="1.5" opacity=".9"/><path d="M28.3 319.10000000000025H76" stroke="#d4dbe3" stroke-width="1.5" stroke-dasharray="1.5 1 7 0.6 2 1 7 1" opacity="0.62"/><path d="M21.5 324.2000000000003H30.5" stroke="#4f8fcf" stroke-width="1.5" opacity=".9"/><path d="M31.3 324.2000000000003H76" stroke="#d4dbe3" stroke-width="1.5" stroke-dasharray="2 1.4 5 0.8 5 0.6 4 1.4" opacity="0.62"/><path d="M21.5 327.3000000000003H29.5" stroke="#4f8fcf" stroke-width="1.5" opacity=".9"/><path d="M30.3 327.3000000000003H76" stroke="#d4dbe3" stroke-width="1.5" stroke-dasharray="7 0.6 4 0.6 1.5 0.6 7 0.8" opacity="0.62"/><path d="M21.5 330.4000000000003H30.5" stroke="#4f8fcf" stroke-width="1.5" opacity=".9"/><path d="M31.3 330.4000000000003H76" stroke="#d4dbe3" stroke-width="1.5" stroke-dasharray="4 1.4 5 0.6 2 1.4 1.5 0.6" opacity="0.62"/><path d="M21.5 335.50000000000034H30.5" stroke="#4f8fcf" stroke-width="1.5" opacity=".9"/><path d="M31.3 335.50000000000034H76" stroke="#d4dbe3" stroke-width="1.5" stroke-dasharray="3 1 3 1.4 5 0.6 7 1.4" opacity="0.62"/><path d="M21.5 340.60000000000036H27.5" stroke="#4f8fcf" stroke-width="1.5" opacity=".9"/><path d="M28.3 340.60000000000036H76" stroke="#d4dbe3" stroke-width="1.5" stroke-dasharray="5 0.6 4 0.8 4 1.4 2 1.4" opacity="0.62"/><path d="M21.5 343.7000000000004H27.5" stroke="#4f8fcf" stroke-width="1.5" opacity=".9"/><path d="M28.3 343.7000000000004H76" stroke="#d4dbe3" stroke-width="1.5" stroke-dasharray="4 1.4 4 1 5 1.4 5 1" opacity="0.62"/><path d="M21.5 346.8000000000004H30.5" stroke="#4f8fcf" stroke-width="1.5" opacity=".9"/><path d="M31.3 346.8000000000004H76" stroke="#d4dbe3" stroke-width="1.5" stroke-dasharray="5 1 4 1 5 1 7 1" opacity="0.62"/><path d="M21.5 351.90000000000043H27.5" stroke="#4f8fcf" stroke-width="1.5" opacity=".9"/><path d="M28.3 351.90000000000043H76" stroke="#d4dbe3" stroke-width="1.5" stroke-dasharray="1.5 0.8 5 0.6 7 0.8 4 1.4" opacity="0.62"/><path d="M21.5 357.00000000000045H27.5" stroke="#4f8fcf" stroke-width="1.5" opacity=".9"/><path d="M28.3 357.00000000000045H76" stroke="#d4dbe3" stroke-width="1.5" stroke-dasharray="3 1.4 1.5 1 1.5 0.8 4 1.4" opacity="0.62"/><path d="M21.5 360.1000000000005H30.5" stroke="#4f8fcf" stroke-width="1.5" opacity=".9"/><path d="M31.3 360.1000000000005H76" stroke="#d4dbe3" stroke-width="1.5" stroke-dasharray="2 0.6 5 0.6 7 1.4 2 0.8" opacity="0.62"/><path d="M21.5 365.2000000000005H27.5" stroke="#4f8fcf" stroke-width="1.5" opacity=".9"/><path d="M28.3 365.2000000000005H76" stroke="#d4dbe3" stroke-width="1.5" stroke-dasharray="1.5 1.4 4 0.6 2 0.6 3 0.8" opacity="0.62"/><path d="M21.5 368.3000000000005H27.5" stroke="#4f8fcf" stroke-width="1.5" opacity=".9"/><path d="M28.3 368.3000000000005H76" stroke="#d4dbe3" stroke-width="1.5" stroke-dasharray="3 1.4 2 1.4 4 1 7 1.4" opacity="0.62"/><path d="M21.5 373.40000000000055H30.5" stroke="#4f8fcf" stroke-width="1.5" opacity=".9"/><path d="M31.3 373.40000000000055H76" stroke="#d4dbe3" stroke-width="1.5" stroke-dasharray="7 0.8 3 0.8 2 1.4 1.5 1" opacity="0.62"/><path d="M21.5 376.50000000000057H30.5" stroke="#4f8fcf" stroke-width="1.5" opacity=".9"/><path d="M31.3 376.50000000000057H76" stroke="#d4dbe3" stroke-width="1.5" stroke-dasharray="3 1 5 0.8 7 1 2 0.8" opacity="0.62"/><path d="M21.5 379.6000000000006H29.5" stroke="#4f8fcf" stroke-width="1.5" opacity=".9"/><path d="M30.3 379.6000000000006H76" stroke="#d4dbe3" stroke-width="1.5" stroke-dasharray="5 0.8 7 0.6 7 0.6 1.5 1" opacity="0.62"/><path d="M21.5 384.7000000000006H30.5" stroke="#4f8fcf" stroke-width="1.5" opacity=".9"/><path d="M31.3 384.7000000000006H76" stroke="#d4dbe3" stroke-width="1.5" stroke-dasharray="4 0.6 5 0.6 1.5 0.8 5 1" opacity="0.62"/><path d="M21.5 389.80000000000064H27.5" stroke="#4f8fcf" stroke-width="1.5" opacity=".9"/><path d="M28.3 389.80000000000064H76" stroke="#d4dbe3" stroke-width="1.5" stroke-dasharray="1.5 0.8 5 0.8 7 1 4 1.4" opacity="0.62"/><path d="M21.5 392.90000000000066H30.5" stroke="#4f8fcf" stroke-width="1.5" opacity=".9"/><path d="M31.3 392.90000000000066H76" stroke="#d4dbe3" stroke-width="1.5" stroke-dasharray="2 1 3 1.4 7 0.8 1.5 0.6" opacity="0.62"/><path d="M21.5 396.0000000000007H31.5" stroke="#4f8fcf" stroke-width="1.5" opacity=".9"/><path d="M32.3 396.0000000000007H76" stroke="#d4dbe3" stroke-width="1.5" stroke-dasharray="5 0.8 4 1.4 7 1 4 0.8" opacity="0.62"/><path d="M21.5 401.1000000000007H30.5" stroke="#4f8fcf" stroke-width="1.5" opacity=".9"/><path d="M31.3 401.1000000000007H76" stroke="#d4dbe3" stroke-width="1.5" stroke-dasharray="2 1 3 0.8 4 1 5 0.6" opacity="0.62"/><path d="M21.5 406.2000000000007H31.5" stroke="#4f8fcf" stroke-width="1.5" opacity=".9"/><path d="M32.3 406.2000000000007H76" stroke="#d4dbe3" stroke-width="1.5" stroke-dasharray="3 0.6 5 0.6 4 1.4 7 1.4" opacity="0.62"/><path d="M21.5 409.30000000000075H30.5" stroke="#4f8fcf" stroke-width="1.5" opacity=".9"/><path d="M31.3 409.30000000000075H76" stroke="#d4dbe3" stroke-width="1.5" stroke-dasharray="1.5 0.6 3 0.8 7 0.6 7 1" opacity="0.62"/><path d="M21.5 414.4000000000008H31.5" stroke="#4f8fcf" stroke-width="1.5" opacity=".9"/><path d="M32.3 414.4000000000008H76" stroke="#d4dbe3" stroke-width="1.5" stroke-dasharray="7 1 3 0.8 2 1 7 1" opacity="0.62"/><path d="M21.5 417.5000000000008H30.5" stroke="#4f8fcf" stroke-width="1.5" opacity=".9"/><path d="M31.3 417.5000000000008H76" stroke="#d4dbe3" stroke-width="1.5" stroke-dasharray="1.5 1 7 1.4 5 1 4 1" opacity="0.62"/><path d="M21.5 422.6000000000008H31.5" stroke="#4f8fcf" stroke-width="1.5" opacity=".9"/><path d="M32.3 422.6000000000008H76" stroke="#d4dbe3" stroke-width="1.5" stroke-dasharray="3 0.8 4 0.8 1.5 1 3 0.6" opacity="0.62"/><path d="M21.5 425.70000000000084H30.5" stroke="#4f8fcf" stroke-width="1.5" opacity=".9"/><path d="M31.3 425.70000000000084H76" stroke="#d4dbe3" stroke-width="1.5" stroke-dasharray="7 1.4 5 1.4 2 1 4 0.8" opacity="0.62"/><path d="M21.5 428.80000000000086H29.5" stroke="#4f8fcf" stroke-width="1.5" opacity=".9"/><path d="M30.3 428.80000000000086H76" stroke="#d4dbe3" stroke-width="1.5" stroke-dasharray="2 0.6 4 1 1.5 0.8 5 0.6" opacity="0.62"/><path d="M21.5 433.9000000000009H29.5" stroke="#4f8fcf" stroke-width="1.5" opacity=".9"/><path d="M30.3 433.9000000000009H76" stroke="#d4dbe3" stroke-width="1.5" stroke-dasharray="5 1 1.5 1.4 1.5 1 5 0.6" opacity="0.62"/><path d="M21.5 439.0000000000009H30.5" stroke="#4f8fcf" stroke-width="1.5" opacity=".9"/><path d="M31.3 439.0000000000009H76" stroke="#d4dbe3" stroke-width="1.5" stroke-dasharray="1.5 1 7 0.6 3 0.6 1.5 0.8" opacity="0.62"/><path d="M21.5 442.10000000000093H27.5" stroke="#4f8fcf" stroke-width="1.5" opacity=".9"/><path d="M28.3 442.10000000000093H76" stroke="#d4dbe3" stroke-width="1.5" stroke-dasharray="7 1.4 2 0.8 4 1 4 1.4" opacity="0.62"/><path d="M21.5 445.20000000000095H30.5" stroke="#4f8fcf" stroke-width="1.5" opacity=".9"/><path d="M31.3 445.20000000000095H76" stroke="#d4dbe3" stroke-width="1.5" stroke-dasharray="3 1 7 0.8 4 1.4 5 0.6" opacity="0.62"/><path d="M21.5 450.300000000001H27.5" stroke="#4f8fcf" stroke-width="1.5" opacity=".9"/><path d="M28.3 450.300000000001H76" stroke="#d4dbe3" stroke-width="1.5" stroke-dasharray="4 1 1.5 1.4 1.5 1.4 5 0.6" opacity="0.62"/><path d="M21.5 455.400000000001H30.5" stroke="#4f8fcf" stroke-width="1.5" opacity=".9"/><path d="M31.3 455.400000000001H76" stroke="#d4dbe3" stroke-width="1.5" stroke-dasharray="7 0.6 1.5 1.4 4 0.8 2 0.8" opacity="0.62"/><path d="M21.5 458.500000000001H31.5" stroke="#4f8fcf" stroke-width="1.5" opacity=".9"/><path d="M32.3 458.500000000001H76" stroke="#d4dbe3" stroke-width="1.5" stroke-dasharray="7 0.8 3 0.8 4 1.4 5 1" opacity="0.62"/><path d="M21.5 463.60000000000105H30.5" stroke="#4f8fcf" stroke-width="1.5" opacity=".9"/><path d="M31.3 463.60000000000105H76" stroke="#d4dbe3" stroke-width="1.5" stroke-dasharray="1.5 1.4 3 0.6 3 0.8 2 0.6" opacity="0.62"/><path d="M21.5 466.70000000000107H31.5" stroke="#4f8fcf" stroke-width="1.5" opacity=".9"/><path d="M32.3 466.70000000000107H76" stroke="#d4dbe3" stroke-width="1.5" stroke-dasharray="1.5 1.4 1.5 1 1.5 0.8 2 1" opacity="0.62"/><path d="M21.5 471.8000000000011H29.5" stroke="#4f8fcf" stroke-width="1.5" opacity=".9"/><path d="M30.3 471.8000000000011H76" stroke="#d4dbe3" stroke-width="1.5" stroke-dasharray="5 0.8 5 1.4 5 0.8 4 0.8" opacity="0.62"/><path d="M21.5 474.9000000000011H30.5" stroke="#4f8fcf" stroke-width="1.5" opacity=".9"/><path d="M31.3 474.9000000000011H76" stroke="#d4dbe3" stroke-width="1.5" stroke-dasharray="4 0.8 3 1.4 3 1.4 4 1" opacity="0.62"/><path d="M21.5 478.00000000000114H27.5" stroke="#4f8fcf" stroke-width="1.5" opacity=".9"/><path d="M28.3 478.00000000000114H76" stroke="#d4dbe3" stroke-width="1.5" stroke-dasharray="4 0.8 4 0.6 2 0.8 4 1" opacity="0.62"/><path d="M21.5 483.10000000000116H27.5" stroke="#4f8fcf" stroke-width="1.5" opacity=".9"/><path d="M28.3 483.10000000000116H76" stroke="#d4dbe3" stroke-width="1.5" stroke-dasharray="7 0.8 1.5 1.4 3 1.4 2 1.4" opacity="0.62"/><path d="M21.5 488.2000000000012H29.5" stroke="#4f8fcf" stroke-width="1.5" opacity=".9"/><path d="M30.3 488.2000000000012H76" stroke="#d4dbe3" stroke-width="1.5" stroke-dasharray="4 0.8 3 0.8 3 0.8 7 1" opacity="0.62"/><path d="M21.5 491.3000000000012H27.5" stroke="#4f8fcf" stroke-width="1.5" opacity=".9"/><path d="M28.3 491.3000000000012H76" stroke="#d4dbe3" stroke-width="1.5" stroke-dasharray="2 0.8 1.5 0.8 2 0.8 1.5 1" opacity="0.62"/><path d="M21.5 494.4000000000012H30.5" stroke="#4f8fcf" stroke-width="1.5" opacity=".9"/><path d="M31.3 494.4000000000012H76" stroke="#d4dbe3" stroke-width="1.5" stroke-dasharray="5 0.6 4 1.4 1.5 1 1.5 0.8" opacity="0.62"/><path d="M21.5 499.50000000000125H31.5" stroke="#4f8fcf" stroke-width="1.5" opacity=".9"/><path d="M32.3 499.50000000000125H76" stroke="#d4dbe3" stroke-width="1.5" stroke-dasharray="2 0.6 4 0.8 1.5 1.4 5 1.4" opacity="0.62"/><path d="M21.5 504.6000000000013H29.5" stroke="#4f8fcf" stroke-width="1.5" opacity=".9"/><path d="M30.3 504.6000000000013H76" stroke="#d4dbe3" stroke-width="1.5" stroke-dasharray="3 1 3 1.4 1.5 1 4 0.6" opacity="0.62"/><path d="M21.5 507.7000000000013H30.5" stroke="#4f8fcf" stroke-width="1.5" opacity=".9"/><path d="M31.3 507.7000000000013H76" stroke="#d4dbe3" stroke-width="1.5" stroke-dasharray="1.5 0.8 1.5 1.4 7 1.4 7 0.6" opacity="0.62"/><path d="M21.5 512.8000000000013H31.5" stroke="#4f8fcf" stroke-width="1.5" opacity=".9"/><path d="M32.3 512.8000000000013H76" stroke="#d4dbe3" stroke-width="1.5" stroke-dasharray="1.5 1.4 7 1.4 2 1 5 0.6" opacity="0.62"/><path d="M21.5 515.9000000000013H31.5" stroke="#4f8fcf" stroke-width="1.5" opacity=".9"/><path d="M32.3 515.9000000000013H76" stroke="#d4dbe3" stroke-width="1.5" stroke-dasharray="1.5 0.8 5 0.8 3 1.4 5 1" opacity="0.62"/><path d="M21.5 521.0000000000014H30.5" stroke="#4f8fcf" stroke-width="1.5" opacity=".9"/><path d="M31.3 521.0000000000014H76" stroke="#d4dbe3" stroke-width="1.5" stroke-dasharray="4 0.6 3 0.8 2 1.4 7 0.6" opacity="0.62"/><path d="M21.5 524.1000000000014H30.5" stroke="#4f8fcf" stroke-width="1.5" opacity=".9"/><path d="M31.3 524.1000000000014H76" stroke="#d4dbe3" stroke-width="1.5" stroke-dasharray="3 1 5 1.4 7 1 4 1.4" opacity="0.62"/><path d="M21.5 527.2000000000014H27.5" stroke="#4f8fcf" stroke-width="1.5" opacity=".9"/><path d="M28.3 527.2000000000014H76" stroke="#d4dbe3" stroke-width="1.5" stroke-dasharray="1.5 0.8 5 0.6 2 0.8 2 0.8" opacity="0.62"/><path d="M21.5 532.3000000000014H31.5" stroke="#4f8fcf" stroke-width="1.5" opacity=".9"/><path d="M32.3 532.3000000000014H76" stroke="#d4dbe3" stroke-width="1.5" stroke-dasharray="1.5 1.4 5 0.6 1.5 0.8 1.5 0.8" opacity="0.62"/><path d="M21.5 537.4000000000015H27.5" stroke="#4f8fcf" stroke-width="1.5" opacity=".9"/><path d="M28.3 537.4000000000015H76" stroke="#d4dbe3" stroke-width="1.5" stroke-dasharray="4 1.4 1.5 1 4 0.8 7 0.8" opacity="0.62"/><path d="M21.5 540.5000000000015H29.5" stroke="#4f8fcf" stroke-width="1.5" opacity=".9"/><path d="M30.3 540.5000000000015H76" stroke="#d4dbe3" stroke-width="1.5" stroke-dasharray="7 1.4 4 1 4 0.6 7 1.4" opacity="0.62"/><path d="M17 546.5H26" stroke="#4f8fcf" stroke-width="1.4" opacity=".9"/><path d="M26.8 546.5H29" stroke="#d4dbe3" stroke-width="1.4" stroke-dasharray="2 0.6 3 1 2 1 3 1.4" opacity="0.5"/></svg>
<div style="left:1459px;top:553px;width:75px;height:27px;background:#000000;border:1px solid #4a4a4a;"></div>
<svg style="left:1459px;top:553px;overflow:hidden;" width="75" height="27" viewBox="0 0 75 27"><path d="M21.5 5H31.5" stroke="#4f8fcf" stroke-width="1.5" opacity=".9"/><path d="M32.3 5H74" stroke="#d4dbe3" stroke-width="1.5" stroke-dasharray="2 1 3 0.6 5 0.8 3 1" opacity="0.8"/><path d="M21.5 8.5H29.5" stroke="#4f8fcf" stroke-width="1.5" opacity=".9"/><path d="M30.3 8.5H74" stroke="#d4dbe3" stroke-width="1.5" stroke-dasharray="3 0.8 5 0.8 5 0.8 5 0.6" opacity="0.8"/><path d="M21.5 18H29.5" stroke="#4f8fcf" stroke-width="1.5" opacity=".9"/><path d="M30.3 18H74" stroke="#d4dbe3" stroke-width="1.5" stroke-dasharray="1.5 0.8 2 1.4 5 1.4 7 1" opacity="0.8"/><path d="M21.5 23H30.5" stroke="#4f8fcf" stroke-width="1.5" opacity=".9"/><path d="M31.3 23H74" stroke="#d4dbe3" stroke-width="1.5" stroke-dasharray="1.5 1 3 1.4 1.5 1.4 7 0.8" opacity="0.8"/></svg>
<div style="left:1459px;top:564px;width:75px;height:2px;background:#ffffff;"></div>
<div style="left:1459px;top:562px;width:5px;height:6px;background:#5ec45c;"></div>
<div style="left:1464px;top:562px;width:6px;height:6px;background:#b5591a;"></div>
<div style="left:1459px;top:264px;width:6px;height:6px;background:#5ec45c;"></div>
<div style="left:1464px;top:397px;width:7px;height:7px;background:#964a14;border-radius:50%;"></div>
<div style="left:1464px;top:617px;width:7px;height:7px;background:#964a14;border-radius:50%;"></div>
<div style="left:32px;top:679px;width:1503px;height:16px;background:#2b2b2b;"></div>
<div style="left:32px;top:679px;width:60px;height:16px;background:#373737;"></div>
<span style="left:35px;top:679.0px;letter-spacing:-1.108px;">100 %</span>
<svg style="left:83px;top:686px;" width="6" height="3" viewBox="0 0 6 3"><path d="M0 0H6L3.0 3Z" fill="#d0d0d0"/></svg>
<svg style="left:116px;top:681px;" width="12" height="12" viewBox="0 0 12 12"><circle cx="6" cy="6" r="5.800" fill="#6fd470"/><path d="M3 6.200 5.200 8.400 9 4" fill="none" stroke="#15301a" stroke-width="1.500"/></svg>
<span style="left:132px;top:679.0px;letter-spacing:-0.104px;">No issues found</span>
<svg style="left:292px;top:683px;" width="5" height="8" viewBox="0 0 5 8"><path d="M5 0v8L0 4z" fill="#b8b8b8"/></svg>
<div style="left:303px;top:683px;width:588px;height:8px;background:#4d4d4d;"></div>
<svg style="left:1322px;top:683px;" width="5" height="8" viewBox="0 0 5 8"><path d="M0 0v8l5-4z" fill="#b8b8b8"/></svg>
<span style="left:1355px;top:679.0px;letter-spacing:-0.574px;">Ln: 602</span>
<span style="left:1409px;top:679.0px;letter-spacing:-0.552px;">Ch: 70</span>
<div style="left:1451px;top:679px;width:38px;height:16px;background:#333333;"></div>
<div style="left:1491px;top:679px;width:43px;height:16px;background:#333333;"></div>
<span style="left:1460px;top:679.0px;letter-spacing:-1.200px;">SPC</span>
<span style="left:1499px;top:679.0px;letter-spacing:-1.200px;">CRLF</span>
<div style="left:31px;top:701px;width:1504px;height:282px;border:1px solid #3d3d3d;"></div>
<span style="left:36px;top:705.0px;color:#c0c0c0;letter-spacing:-0.232px;">Error List</span>
<svg style="left:1486px;top:711px;" width="8" height="4" viewBox="0 0 8 4"><path d="M0 0H8L4.0 4Z" fill="#d0d0d0"/></svg>
<svg style="left:1502px;top:706px;" width="9" height="12" viewBox="0 0 9 12"><path d="M2.500 .500h4v6h-4zM5.500 .500v6M.500 6.500h8M4.500 6.500v5" fill="none" stroke="#e0e0e0" stroke-width="1"/></svg>
<svg style="left:1518px;top:707px;" width="10" height="10" viewBox="0 0 10 10"><path d="M1 1l8 8M9 1l-8 8" stroke="#e0e0e0" stroke-width="1.500"/></svg>
<div style="left:39px;top:726px;width:150px;height:20px;background:#383838;"></div>
<span style="left:43px;top:728.5px;letter-spacing:-0.032px;">Entire Solution</span>
<svg style="left:179.5px;top:735.5px;" width="6" height="3" viewBox="0 0 6 3"><path d="M0 0H6L3.0 3Z" fill="#d0d0d0"/></svg>
<div style="left:195px;top:727px;width:1px;height:19px;background:#3d3d3d;"></div>
<div style="left:200px;top:725px;width:70px;height:22px;background:#2b2b2b;border:1px solid #7160e8;"></div>
<svg style="left:204px;top:730px;" width="13" height="13" viewBox="0 0 13 13"><circle cx="6.500" cy="6.500" r="6.300" fill="#f2636f"/><path d="M4 4l5 5M9 4l-5 5" stroke="#1a1a1a" stroke-width="1.400"/></svg>
<span style="left:223px;top:728.0px;letter-spacing:-0.441px;">0 Errors</span>
<div style="left:276px;top:727px;width:1px;height:19px;background:#3d3d3d;"></div>
<svg style="left:282px;top:730px;" width="14" height="13" viewBox="0 0 14 13"><path d="M7 .800 13.300 12.400H.700z" fill="#f8dd8e" stroke="#f8dd8e" stroke-width="1" stroke-linejoin="round"/><path d="M7 4.500v4" stroke="#1f1f1f" stroke-width="1.500"/><rect x="6.250" y="9.600" width="1.500" height="1.500" fill="#1f1f1f"/></svg>
<span style="left:301px;top:728.0px;color:#d0d0d0;letter-spacing:-0.147px;">0 of 163 Warnings</span>
<div style="left:406px;top:727px;width:1px;height:19px;background:#3d3d3d;"></div>
<svg style="left:415px;top:730px;" width="13" height="13" viewBox="0 0 13 13"><circle cx="6.500" cy="6.500" r="6.400" fill="#55a9f8"/><rect x="5.800" y="5.500" width="1.500" height="4.800" fill="#10202e"/><rect x="5.800" y="2.800" width="1.500" height="1.600" fill="#10202e"/></svg>
<span style="left:434px;top:728.0px;color:#d0d0d0;letter-spacing:-0.363px;">0 of 101 Messages</span>
<div style="left:540px;top:727px;width:1px;height:19px;background:#3d3d3d;"></div>
<div style="left:545px;top:725px;width:22px;height:22px;background:#2b2b2b;border:1px solid #7160e8;"></div>
<svg style="left:548px;top:728px;" width="17" height="17" viewBox="0 0 17 17"><path d="M5.500 5.500h9L11 10v5h-2.200v-5z" fill="none" stroke="#e8e8e8" stroke-width="1.200"/><circle cx="3.800" cy="4.300" r="2.700" fill="#1a1a1a" stroke="#f0364a" stroke-width="1.800"/></svg>
<div style="left:578px;top:726px;width:150px;height:20px;background:#383838;"></div>
<span style="left:582px;top:728.5px;letter-spacing:-0.095px;">Build + IntelliSense</span>
<svg style="left:717.5px;top:735.5px;" width="6" height="3" viewBox="0 0 6 3"><path d="M0 0H6L3.0 3Z" fill="#d0d0d0"/></svg>
<div style="left:1334px;top:726px;width:200px;height:20px;background:#383838;"></div>
<span style="left:1339px;top:728.0px;color:#d8d8d8;letter-spacing:-0.339px;">Search Error List</span>
<svg style="left:1507px;top:729px;" width="13" height="13" viewBox="0 0 13 13"><circle cx="8.200" cy="4.800" r="3.300" fill="none" stroke="#dedede" stroke-width="1.900"/><path d="M5.800 7.200 1 12" stroke="#dedede" stroke-width="2.400"/></svg>
<svg style="left:1524px;top:734px;" width="6" height="3" viewBox="0 0 6 3"><path d="M0 0H6L3.0 3Z" fill="#d0d0d0"/></svg>
<div style="left:32px;top:770px;width:1503px;height:1px;background:#3d3d3d;"></div>
<div style="left:60px;top:750px;width:1px;height:20px;background:#363636;"></div>
<div style="left:85px;top:750px;width:1px;height:20px;background:#363636;"></div>
<div style="left:135px;top:750px;width:1px;height:20px;background:#363636;"></div>
<div style="left:1049px;top:750px;width:1px;height:20px;background:#363636;"></div>
<div style="left:1199px;top:750px;width:1px;height:20px;background:#363636;"></div>
<div style="left:1349px;top:750px;width:1px;height:20px;background:#363636;"></div>
<div style="left:1383px;top:750px;width:1px;height:20px;background:#363636;"></div>
<div style="left:1509px;top:750px;width:1px;height:20px;background:#363636;"></div>
<div style="left:1531px;top:750px;width:1px;height:20px;background:#363636;"></div>
<svg style="left:74px;top:755px;" width="7" height="6" viewBox="0 0 7 6"><path d="M0 .500h7M2 2.500h5M4 4.500h3" stroke="#c0c0c0" stroke-width="1"/></svg>
<span style="left:89px;top:753.0px;color:#d8d8d8;letter-spacing:-0.029px;">Code</span>
<span style="left:139px;top:752.0px;color:#d8d8d8;letter-spacing:0.057px;">Description</span>
<svg style="left:207px;top:758px;" width="9" height="4" viewBox="0 0 9 4"><path d="M0 4H9L4.5 0Z" fill="#e0e0e0"/></svg>
<span style="left:1053px;top:753.0px;color:#d8d8d8;letter-spacing:0.040px;">Project</span>
<span style="left:1203px;top:753.0px;color:#d8d8d8;letter-spacing:-0.248px;">File</span>
<span style="left:1353px;top:753.0px;color:#d8d8d8;letter-spacing:-0.029px;">Line</span>
<span style="left:1388px;top:753.0px;color:#d8d8d8;letter-spacing:-0.279px;">Suppression State</span>
<span style="left:37px;top:984.0px;color:#b8b8b8;letter-spacing:-0.189px;">Package Manager Console</span>
<span style="left:189px;top:984.0px;color:#b8b8b8;letter-spacing:-0.082px;">Find &quot;System.Runtime&quot;</span>
<div style="left:317px;top:982px;width:58px;height:21px;background:#1f1f1f;border:1px solid #3d3d3d;border-top:none;"></div>
<span style="left:323px;top:984.0px;color:#ffffff;letter-spacing:-0.232px;">Error List</span>
<span style="left:381px;top:984.0px;color:#b8b8b8;letter-spacing:0.514px;">Output</span>
<div style="left:0px;top:1009px;width:1920px;height:23px;background:#434343;"></div>
<svg style="left:4px;top:1013px;" width="17" height="16" viewBox="0 0 17 16"><path d="M.600 .600h15.800v11.800H11.500L8.500 15.400 5.500 12.400H.600z" fill="none" stroke="#f0f0f0" stroke-width="1.200"/></svg>
<span style="left:28px;top:1012.5px;color:#ffffff;letter-spacing:-0.259px;">Item(s) Saved</span>
<svg style="left:1561px;top:1013px;" width="12" height="15" viewBox="0 0 12 15"><path d="M6 15V1M.700 6.300 6 1l5.300 5.300" fill="none" stroke="#f0f0f0" stroke-width="1.100"/></svg>
<span style="left:1581px;top:1012.5px;color:#ffffff;letter-spacing:0.026px;">Add to Source Control</span>
<svg style="left:1705px;top:1019px;" width="8" height="4" viewBox="0 0 8 4"><path d="M0 4H8L4.0 0Z" fill="#f0f0f0"/></svg>
<svg style="left:1735px;top:1013px;" width="16" height="16" viewBox="0 0 16 16"><rect x="2.800" y="2.800" width="10.400" height="10.400" rx="1.200" transform="rotate(45 8 8)" fill="#f0f0f0"/><path d="M6.300 4.800 9.600 8.100M8 6.500v5" stroke="#424242" stroke-width="1.100"/><circle cx="8" cy="6.300" r="1.100" fill="#424242"/><circle cx="8" cy="11.200" r="1.100" fill="#424242"/><circle cx="10" cy="8.400" r="1.100" fill="#424242"/></svg>
<span style="left:1757px;top:1012.5px;color:#ffffff;letter-spacing:-0.215px;">Select Repository</span>
<svg style="left:1853px;top:1019px;" width="8" height="4" viewBox="0 0 8 4"><path d="M0 4H8L4.0 0Z" fill="#f0f0f0"/></svg>
<svg style="left:1882px;top:1011px;" width="14" height="16" viewBox="0 0 14 16"><path d="M2 12.500c1.300-1.500 1.500-3 1.500-5.500 0-2.500 1.500-4.500 3.500-4.500s3.500 2 3.500 4.500" fill="none" stroke="#f0f0f0" stroke-width="1.100"/><path d="M1.500 12.500h6" stroke="#f0f0f0" stroke-width="1.100"/></svg>
<div style="left:1890px;top:1017px;width:12px;height:12px;background:#f47686;border-radius:50%;"></div>
<span style="left:1893.5px;top:1017.5px;font-size:10px;line-height:12px;color:#1a1a1a;">1</span>
<div style="left:1541px;top:72px;width:348px;height:440px;border:1px solid #3d3d3d;"></div>
<span style="left:1546px;top:76.0px;color:#c8c8c8;letter-spacing:-0.049px;">Solution Explorer</span>
<svg style="left:1840px;top:81px;" width="8" height="4" viewBox="0 0 8 4"><path d="M0 0H8L4.0 4Z" fill="#d0d0d0"/></svg>
<svg style="left:1856px;top:77px;" width="9" height="12" viewBox="0 0 9 12"><path d="M2.500 .500h4v6h-4zM5.500 .500v6M.500 6.500h8M4.500 6.500v5" fill="none" stroke="#e0e0e0" stroke-width="1"/></svg>
<svg style="left:1872px;top:78px;" width="10" height="10" viewBox="0 0 10 10"><path d="M1 1l8 8M9 1l-8 8" stroke="#e0e0e0" stroke-width="1.500"/></svg>
<svg style="left:1550px;top:101px;" width="14" height="14" viewBox="0 0 14 14"><circle cx="7" cy="7" r="6.200" fill="none" stroke="#3a3a3a" stroke-width="1.200"/><path d="M10.500 7H4M6.500 4.300 3.800 7l2.700 2.700" fill="none" stroke="#3a3a3a" stroke-width="1.200"/></svg>
<svg style="left:1572px;top:101px;" width="14" height="14" viewBox="0 0 14 14"><circle cx="7" cy="7" r="6.200" fill="none" stroke="#3a3a3a" stroke-width="1.200"/><path d="M3.500 7H10M7.500 4.300 10.200 7 7.500 9.700" fill="none" stroke="#3a3a3a" stroke-width="1.200"/></svg>
<svg style="left:1593.5px;top:101px;" width="15" height="14" viewBox="0 0 17 16"><path d="M1 8.500 8.500 1.500 16 8.500M3.500 7v8h3.800v-4.500h2.400V15h3.800V7" fill="none" stroke="#dcdcdc" stroke-width="1.350"/></svg>
<svg style="left:1614px;top:100px;" width="18" height="17" viewBox="0 0 18 17"><path d="M7.500 1.500h9v10h-6" fill="none" stroke="#dcdcdc" stroke-width="1.100"/><path d="M9.500 4h5M9.500 6.500h5M11 9h3.500" stroke="#dcdcdc" stroke-width="1.100"/><path d="M7 6.800 9 7.700v7.500l-2 .900-3.400-3.100-1.700 1.300L1 13.800v-4.600l.900-.500 1.700 1.300zM7 9.500 5 11.500l2 2z" fill="#9a78e0" fill-rule="evenodd"/></svg>
<div style="left:1637px;top:98px;width:1px;height:21px;background:#3d3d3d;"></div>
<svg style="left:1644px;top:99px;" width="18" height="18" viewBox="0 0 18 18"><path d="M.500 .500h5L3.800 3v2.500L2.200 4.500V3z" fill="#3b9bf5"/><circle cx="10.500" cy="10.500" r="5.100" fill="none" stroke="#dcdcdc" stroke-width="1.200"/><path d="M10.500 7.300v3.700h2.800" fill="none" stroke="#dcdcdc" stroke-width="1.200"/></svg>
<svg style="left:1668px;top:107px;" width="6" height="3" viewBox="0 0 6 3"><path d="M0 0H6L3.0 3Z" fill="#d0d0d0"/></svg>
<svg style="left:1681px;top:102px;" width="14" height="12" viewBox="0 0 14 12"><path d="M.500 4.500H13.500M.800 4.500 4.500 .800M13.500 7.500H.500M13.200 7.500 9.500 11.200" fill="none" stroke="#dcdcdc" stroke-width="1.300"/></svg>
<svg style="left:1702px;top:100px;" width="17" height="17" viewBox="0 0 17 17"><path d="M4.800 3.300A6.400 6.400 0 1 0 11 2.600" fill="none" stroke="#3b8fe4" stroke-width="1.400"/><path d="M1.300 1.800 5.300 1.300 5.800 5.300" fill="none" stroke="#3b8fe4" stroke-width="1.400"/></svg>
<svg style="left:1725px;top:100px;" width="16" height="16" viewBox="0 0 16 16"><path d="M3 2.500v-2h12.400v10.500h-2" fill="none" stroke="#c8c8c8" stroke-width="1"/><rect x=".600" y="2.600" width="12.300" height="12" fill="#1f1f1f" stroke="#e0e0e0" stroke-width="1.200"/><path d="M3.500 8.600h6.500" stroke="#e0e0e0" stroke-width="1.200"/></svg>
<div style="left:1743px;top:96px;width:22px;height:24px;background:#2b2b2b;border:1px solid #7160e8;"></div>
<svg style="left:1747px;top:101px;" width="15" height="15" viewBox="0 0 15 15"><path d="M5 4.500v-4h9.500v9.500h-4" fill="none" stroke="#dcdcdc" stroke-width="1.100"/><rect x=".600" y="4.600" width="9.800" height="9.800" fill="none" stroke="#dcdcdc" stroke-width="1.100"/><rect x="3.500" y="2.500" width="8" height="9" fill="none" stroke="#9a9a9a" stroke-width=".800"/></svg>
<div style="left:1769px;top:98px;width:1px;height:21px;background:#3d3d3d;"></div>
<svg style="left:1778px;top:105px;" width="12" height="7" viewBox="0 0 12 7"><path d="M4 .700 1.200 3.500 4 6.300M7.500 .700l2.800 2.800-2.800 2.800" fill="none" stroke="#dcdcdc" stroke-width="1.300"/></svg>
<svg style="left:1798px;top:100px;" width="16" height="16" viewBox="0 0 16 16"><path d="M9 7 2 14" stroke="#dcdcdc" stroke-width="2.800" stroke-linecap="round"/><path d="M8.600 7.400 2.200 13.800" stroke="#1f1f1f" stroke-width=".900" stroke-linecap="round"/><path d="M15.300 4.200 12.700 6.800l-2.300-.600-.600-2.300L12.400 1.300C9.800 0.300 7 2.500 7.600 5.400L8.500 8.300C11.700 9.700 15.700 7.400 15.300 4.200z" fill="#dcdcdc"/></svg>
<div style="left:1817px;top:96px;width:22px;height:24px;background:#2b2b2b;border:1px solid #7160e8;"></div>
<svg style="left:1820px;top:101px;" width="17" height="14" viewBox="0 0 17 14"><rect x="2.600" y="6.300" width="9.200" height="3.200" fill="none" stroke="#f0f0f0" stroke-width="1.200"/><path d="M0 9.500h12.400" stroke="#f0f0f0" stroke-width="1.200"/><path d="M11 1.300v2M13.500 4.300l1.300-.900M14 7h1.600" stroke="#e9cf7b" stroke-width="1.100"/></svg>
<div style="left:1542px;top:122px;width:346px;height:21px;background:#383838;"></div>
<span style="left:1547px;top:124.5px;color:#e0e0e0;letter-spacing:-0.098px;">Search Solution Explorer (Ctrl+ç)</span>
<svg style="left:1860px;top:126px;" width="13" height="13" viewBox="0 0 13 13"><circle cx="8.200" cy="4.800" r="3.300" fill="none" stroke="#dedede" stroke-width="1.900"/><path d="M5.800 7.200 1 12" stroke="#dedede" stroke-width="2.400"/></svg>
<svg style="left:1878px;top:131px;" width="6" height="3" viewBox="0 0 6 3"><path d="M0 0H6L3.0 3Z" fill="#d0d0d0"/></svg>
<span style="left:1612.5px;top:147.0px;font-size:11px;color:#dd8a6c;letter-spacing:-1.200px;">JS</span>
<span style="left:1631px;top:147.0px;color:#f5f5f5;letter-spacing:0.034px;">jquery.nicescroll.iframehelper.js</span>
<span style="left:1612.5px;top:166.0px;font-size:11px;color:#dd8a6c;letter-spacing:-1.200px;">JS</span>
<span style="left:1631px;top:166.0px;color:#f5f5f5;letter-spacing:0.067px;">jquery.nicescroll.iframehelper.min.js</span>
<span style="left:1612.5px;top:185.0px;font-size:11px;color:#dd8a6c;letter-spacing:-1.200px;">JS</span>
<span style="left:1631px;top:185.0px;color:#f5f5f5;letter-spacing:0.023px;">jquery.nicescroll.js</span>
<span style="left:1612.5px;top:204.0px;font-size:11px;color:#dd8a6c;letter-spacing:-1.200px;">JS</span>
<span style="left:1631px;top:204.0px;color:#f5f5f5;letter-spacing:0.078px;">jquery.nicescroll.min.js</span>
<span style="left:1612.5px;top:223.0px;font-size:11px;color:#dd8a6c;letter-spacing:-1.200px;">JS</span>
<span style="left:1631px;top:223.0px;color:#f5f5f5;letter-spacing:0.051px;">jquery.qrcode.js</span>
<span style="left:1612.5px;top:242.0px;font-size:11px;color:#dd8a6c;letter-spacing:-1.200px;">JS</span>
<span style="left:1631px;top:242.0px;color:#f5f5f5;letter-spacing:0.155px;">jquery.tooltipster.js</span>
<span style="left:1612.5px;top:261.0px;font-size:11px;color:#dd8a6c;letter-spacing:-1.200px;">JS</span>
<span style="left:1631px;top:261.0px;color:#f5f5f5;letter-spacing:0.185px;">jquery.tooltipster.min.js</span>
<span style="left:1612.5px;top:280.0px;font-size:11px;color:#dd8a6c;letter-spacing:-1.200px;">JS</span>
<span style="left:1631px;top:280.0px;color:#f5f5f5;letter-spacing:-0.099px;">js.cookie.js</span>
<span style="left:1612.5px;top:299.0px;font-size:11px;color:#dd8a6c;letter-spacing:-1.200px;">JS</span>
<span style="left:1631px;top:299.0px;color:#f5f5f5;letter-spacing:-0.143px;">lazyload.js</span>
<span style="left:1612.5px;top:318.0px;font-size:11px;color:#dd8a6c;letter-spacing:-1.200px;">JS</span>
<span style="left:1631px;top:318.0px;color:#f5f5f5;letter-spacing:-0.078px;">masterslider.js</span>
<span style="left:1612.5px;top:337.0px;font-size:11px;color:#dd8a6c;letter-spacing:-1.200px;">JS</span>
<span style="left:1631px;top:337.0px;color:#f5f5f5;letter-spacing:0.013px;">masterslider.min.js</span>
<svg style="left:1612px;top:357px;" width="12" height="14" viewBox="0 0 12 14"><path d="M.600 .600h7.400l3.400 3.400v9.400H.600z" fill="none" stroke="#d8d8d8" stroke-width="1.100"/><path d="M8 .600v3.400h3.400M2.800 6h6.400M2.800 8.300h6.400M2.800 10.600h6.400" fill="none" stroke="#d8d8d8" stroke-width="1"/></svg>
<span style="left:1631px;top:356.0px;color:#f5f5f5;letter-spacing:0.025px;">masterslider.min.js.map</span>
<span style="left:1612.5px;top:375.0px;font-size:11px;color:#dd8a6c;letter-spacing:-1.200px;">JS</span>
<span style="left:1631px;top:375.0px;color:#f5f5f5;letter-spacing:-0.085px;">modernizr-2.8.3.js</span>
<span style="left:1612.5px;top:394.0px;font-size:11px;color:#dd8a6c;letter-spacing:-1.200px;">JS</span>
<span style="left:1631px;top:394.0px;color:#f5f5f5;letter-spacing:-0.013px;">qrcode.js</span>
<span style="left:1612.5px;top:413.0px;font-size:11px;color:#dd8a6c;letter-spacing:-1.200px;">JS</span>
<span style="left:1631px;top:413.0px;color:#f5f5f5;letter-spacing:0.030px;">toastr.js</span>
<svg style="left:1612px;top:433px;" width="12" height="14" viewBox="0 0 12 14"><path d="M.600 .600h7.400l3.400 3.400v9.400H.600z" fill="none" stroke="#d8d8d8" stroke-width="1.100"/><path d="M8 .600v3.400h3.400M2.800 6h6.400M2.800 8.300h6.400M2.800 10.600h6.400" fill="none" stroke="#d8d8d8" stroke-width="1"/></svg>
<span style="left:1631px;top:432.0px;color:#f5f5f5;letter-spacing:0.047px;">toastr.js.map</span>
<span style="left:1612.5px;top:451.0px;font-size:11px;color:#dd8a6c;letter-spacing:-1.200px;">JS</span>
<span style="left:1631px;top:451.0px;color:#f5f5f5;letter-spacing:0.131px;">toastr.min.js</span>
<span style="left:1612.5px;top:470.0px;font-size:11px;color:#dd8a6c;letter-spacing:-1.200px;">JS</span>
<span style="left:1631px;top:470.0px;color:#f5f5f5;letter-spacing:0.170px;">view-common-2.2.js</span>
<span style="left:1612.5px;top:489.0px;font-size:11px;color:#dd8a6c;letter-spacing:-1.200px;">JS</span>
<span style="left:1631px;top:489.0px;color:#f5f5f5;letter-spacing:-0.023px;">view-hashtools-1.0.js</span>
<div style="left:1871px;top:143px;width:17px;height:368px;background:#2e2e2e;"></div>
<svg style="left:1875px;top:151px;" width="9" height="5" viewBox="0 0 9 5"><path d="M0 5H9L4.5 0Z" fill="#999999"/></svg>
<div style="left:1875px;top:456px;width:9px;height:17px;background:#4d4d4d;"></div>
<svg style="left:1876px;top:500px;" width="9" height="5" viewBox="0 0 9 5"><path d="M0 0h9L4.500 5z" fill="#b0b0b0"/></svg>
<div style="left:1541px;top:511px;width:102px;height:20px;background:#1f1f1f;border:1px solid #3d3d3d;border-top:none;"></div>
<span style="left:1547px;top:513.0px;color:#ffffff;letter-spacing:-0.049px;">Solution Explorer</span>
<span style="left:1649px;top:513.0px;color:#b0b0b0;letter-spacing:-0.210px;">Git Changes</span>
<div style="left:1541px;top:538px;width:348px;height:466px;border:1px solid #3d3d3d;"></div>
<span style="left:1546px;top:542.0px;color:#b8b8b8;letter-spacing:-0.123px;">Properties</span>
<svg style="left:1840px;top:547px;" width="8" height="4" viewBox="0 0 8 4"><path d="M0 0H8L4.0 4Z" fill="#d0d0d0"/></svg>
<svg style="left:1856px;top:543px;" width="9" height="12" viewBox="0 0 9 12"><path d="M2.500 .500h4v6h-4zM5.500 .500v6M.500 6.500h8M4.500 6.500v5" fill="none" stroke="#e0e0e0" stroke-width="1"/></svg>
<svg style="left:1872px;top:544px;" width="10" height="10" viewBox="0 0 10 10"><path d="M1 1l8 8M9 1l-8 8" stroke="#e0e0e0" stroke-width="1.500"/></svg>
<div style="left:1542px;top:560px;width:346px;height:23px;background:#3b3b3b;"></div>
<span style="left:1554px;top:564.0px;letter-spacing:0.121px;">XML Document</span>
<svg style="left:1879px;top:571px;" width="6" height="3" viewBox="0 0 6 3"><path d="M0 0H6L3.0 3Z" fill="#d0d0d0"/></svg>
<svg style="left:1548.5px;top:590px;" width="15" height="15" viewBox="0 0 15 15"><rect x=".500" y="0.5" width="5.500" height="5.500" fill="#e4e4e4"/><path d="M1.800 3.25h3M3.300 1.75v3" stroke="#1f1f1f" stroke-width="1.100"/><rect x="7.500" y="0.8" width="7" height="1.100" fill="#e4e4e4"/><rect x="7.500" y="3.2" width="7" height="1.100" fill="#e4e4e4"/><rect x="7.500" y="5.6" width="4.5" height="1.100" fill="#e4e4e4"/><rect x=".500" y="9" width="5.500" height="5.500" fill="#e4e4e4"/><path d="M1.800 11.75h3M3.300 10.25v3" stroke="#1f1f1f" stroke-width="1.100"/><rect x="7.500" y="9.3" width="7" height="1.100" fill="#e4e4e4"/><rect x="7.500" y="11.7" width="7" height="1.100" fill="#e4e4e4"/><rect x="7.500" y="14.1" width="4.5" height="1.100" fill="#e4e4e4"/></svg>
<div style="left:1568px;top:586px;width:23px;height:22px;background:#2b2b2b;border:1px solid #7160e8;"></div>
<svg style="left:1571px;top:589px;" width="17" height="16" viewBox="0 0 17 16"><rect x=".500" y="1" width="7.500" height="6.500" fill="#e4e4e4"/><rect x=".500" y="9" width="7.500" height="6.500" fill="#e4e4e4"/><text x="4.250" y="6.800" font-size="6.800" font-weight="700" text-anchor="middle" fill="#1f1f1f" font-family="Liberation Sans, sans-serif">A</text><text x="4.250" y="14.800" font-size="6.800" font-weight="700" text-anchor="middle" fill="#1f1f1f" font-family="Liberation Sans, sans-serif">Z</text><path d="M12.500 4v8" fill="none" stroke="#35b6f2" stroke-width="2.200"/><path d="M8.800 9.500h7.400L12.500 14.300z" fill="#35b6f2"/></svg>
<div style="left:1594px;top:588px;width:1px;height:19px;background:#3d3d3d;"></div>
<svg style="left:1600px;top:588px;" width="18" height="18" viewBox="0 0 18 18"><path d="M9.500 8.500 3 15" stroke="#8c8c8c" stroke-width="4" stroke-linecap="round"/><path d="M16.600 5.500 13.600 8.300l-2.600-.600-.600-2.600 2.900-2.900C9.800.800 6.600 3.500 7.400 6.900L8.500 10.200c3.600 1.200 8.500-1 8.100-4.700z" fill="#8c8c8c"/></svg>
<div style="left:1543px;top:611px;width:14px;height:77px;background:#2d2d2d;"></div>
<div style="left:1557px;top:611px;width:152px;height:19px;background:#333333;"></div>
<div style="left:1557px;top:630px;width:331px;height:1px;background:#2d2d2d;"></div>
<div style="left:1557px;top:649px;width:331px;height:1px;background:#2d2d2d;"></div>
<div style="left:1557px;top:668px;width:331px;height:1px;background:#2d2d2d;"></div>
<div style="left:1557px;top:687px;width:331px;height:1px;background:#2d2d2d;"></div>
<div style="left:1709px;top:611px;width:1px;height:77px;background:#2d2d2d;"></div>
<span style="left:1561px;top:613.0px;letter-spacing:0.079px;">Encoding</span>
<span style="left:1561px;top:632.0px;letter-spacing:0.514px;">Output</span>
<span style="left:1561px;top:651.0px;letter-spacing:-0.405px;">Schemas</span>
<span style="left:1561px;top:670.0px;letter-spacing:-0.272px;">Stylesheet</span>
<span style="left:1713.5px;top:613.0px;color:#ffffff;font-weight:700;letter-spacing:-0.112px;">Unicode (UTF-8)</span>
<div style="left:1710px;top:650px;width:178px;height:18px;overflow:hidden;"></div>
<div style="left:1710px;top:650px;width:178px;height:18px;overflow:hidden;">
<span style="left:3.5px;top:1.0px;color:#ffffff;font-weight:700;letter-spacing:-0.220px;">&quot;C:\Program Files\Microsoft Vis</span>
<span style="left:177px;top:1.0px;color:#ffffff;font-weight:700;">ual Studio</span>
</div>
<div style="left:1542px;top:940px;width:346px;height:1px;background:#3d3d3d;"></div>
<span style="left:1548px;top:947.0px;color:#ffffff;font-weight:700;letter-spacing:-0.582px;">Encoding</span>
<span style="left:1548px;top:965.0px;letter-spacing:0.063px;">Character encoding of the document.</span>
<div style="left:1914px;top:72px;width:6px;height:86px;background:#353535;"></div>
<span style="left:1911px;top:72.0px;color:#c8c8c8;letter-spacing:-0.071px;transform-origin:0 0;transform:rotate(90deg);">Diagnostic Tools</span>
</div></body></html>
